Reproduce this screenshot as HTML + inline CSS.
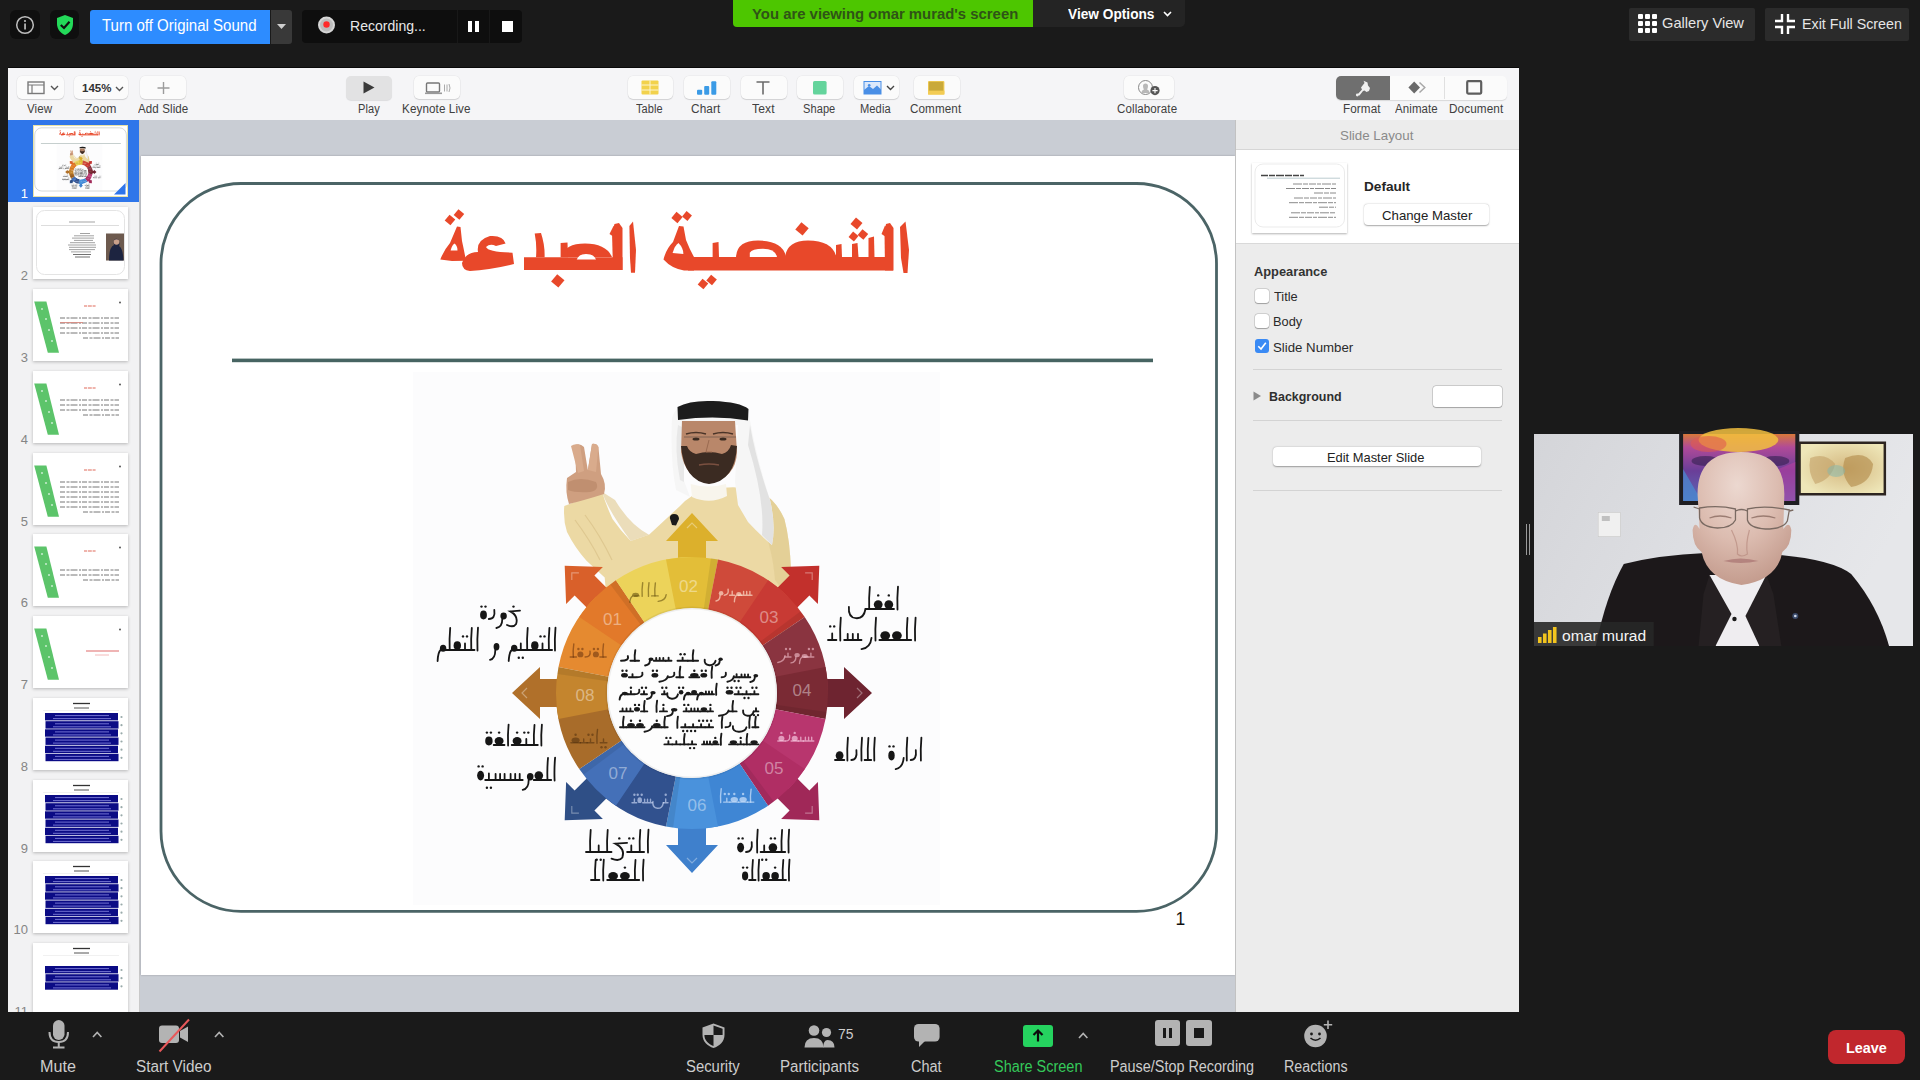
<!DOCTYPE html>
<html><head><meta charset="utf-8">
<style>
*{margin:0;padding:0;box-sizing:border-box}
html,body{width:1920px;height:1080px;overflow:hidden;background:#1a1a1a;font-family:"Liberation Sans",sans-serif}
.a{position:absolute}
.t{position:absolute;white-space:nowrap;line-height:1}
svg{position:absolute;overflow:visible}
/* keynote toolbar */
.kb{position:absolute;top:76px;height:23px;background:#fbfbfb;border-radius:5px;box-shadow:0 1px 1px rgba(0,0,0,.12),0 0 0 .5px rgba(0,0,0,.06)}
.kl{position:absolute;top:103px;font-size:12px;color:#404040;white-space:nowrap;line-height:1;letter-spacing:.1px}
.zl{position:absolute;top:1059px;font-size:16px;color:#cdcdcd;white-space:nowrap;line-height:1;transform-origin:0 0}
.num{position:absolute;font-size:13px;color:#808080;line-height:1;text-align:right;width:20px;left:8px}
.thumb{position:absolute;left:33px;width:95px;height:72px;background:#fff;box-shadow:0 1px 3px rgba(0,0,0,.25)}
</style></head><body>

<!-- ===== ZOOM TOP BAR ===== -->
<div class="a" style="left:10px;top:10px;width:30px;height:29px;background:#0f0f0f;border-radius:6px"></div>
<svg style="left:14px;top:14px" width="22" height="22" viewBox="0 0 22 22"><circle cx="11" cy="11" r="8.3" fill="none" stroke="#bdbdbd" stroke-width="1.5"/><rect x="10.2" y="9.5" width="1.7" height="6" fill="#bdbdbd"/><circle cx="11" cy="7" r="1.1" fill="#bdbdbd"/></svg>
<div class="a" style="left:50px;top:10px;width:29px;height:29px;background:#0f0f0f;border-radius:6px"></div>
<svg style="left:55px;top:14px" width="20" height="22" viewBox="0 0 20 22"><path d="M10 1 L18 4 L18 10 C18 15 14.5 19 10 21 C5.5 19 2 15 2 10 L2 4 Z" fill="#23d959"/><path d="M5.8 11 L9 14 L14.5 7.8" fill="none" stroke="#0f0f0f" stroke-width="2.2"/></svg>
<div class="a" style="left:90px;top:10px;width:180px;height:34px;background:#2d8cff;border-radius:3px 0 0 3px"></div>
<div class="t" id="t_orig" style="left:101.5px;top:18px;font-size:16px;color:#fff;transform:scaleX(0.939);transform-origin:0 0">Turn off Original Sound</div>
<div class="a" style="left:271px;top:10px;width:21px;height:34px;background:#393939;border-radius:0 3px 3px 0"></div>
<svg style="left:277px;top:24px" width="10" height="6"><path d="M0 0 L9 0 L4.5 5 Z" fill="#cfcfcf"/></svg>
<div class="a" style="left:302px;top:10px;width:220px;height:33px;background:#0e0e0e;border-radius:4px"></div>
<div class="a" style="left:457px;top:10px;width:1px;height:33px;background:#181818"></div>
<div class="a" style="left:489px;top:10px;width:1px;height:33px;background:#181818"></div>
<svg style="left:317px;top:16px" width="20" height="20"><circle cx="9.5" cy="9" r="8.5" fill="#d6d6d6"/><circle cx="9.5" cy="9" r="6.5" fill="#bcbcbc"/><circle cx="9.5" cy="8.5" r="3.2" fill="#ff2a2a"/></svg>
<div class="t" id="t_rec" style="left:349.8px;top:18px;font-size:15.5px;color:#e8e8e8;transform:scaleX(0.906);transform-origin:0 0">Recording...</div>
<svg style="left:468px;top:20px" width="14" height="14"><rect x="0" y="1" width="4" height="11" fill="#fff"/><rect x="7" y="1" width="4" height="11" fill="#fff"/></svg>
<svg style="left:501px;top:20px" width="14" height="14"><rect x="1" y="1" width="11" height="11" fill="#fff"/></svg>

<div class="a" style="left:733px;top:0;width:300px;height:27px;background:#4dc600;border-radius:0 0 0 4px"></div>
<div class="t" id="t_view" style="left:751.5px;top:6px;font-size:15px;font-weight:bold;color:#2f5417;transform:scaleX(0.992);transform-origin:0 0">You are viewing omar murad's screen</div>
<div class="a" style="left:1033px;top:0;width:152px;height:27px;background:#242424;border-radius:0 0 5px 0"></div>
<div class="t" id="t_vo" style="left:1067.5px;top:7px;font-size:14px;font-weight:bold;color:#fff;transform:scaleX(0.978);transform-origin:0 0">View Options</div>
<svg style="left:1163px;top:11px" width="10" height="7"><path d="M1 1 L4.5 4.5 L8 1" fill="none" stroke="#fff" stroke-width="1.6"/></svg>

<div class="a" style="left:1629px;top:8px;width:126px;height:33px;background:#2b2b2b;border-radius:2px"></div>
<svg style="left:1638px;top:14px" width="19" height="19"><g fill="#fff"><rect x="0" y="0" width="5" height="5" rx="1"/><rect x="7" y="0" width="5" height="5" rx="1"/><rect x="14" y="0" width="5" height="5" rx="1"/><rect x="0" y="7" width="5" height="5" rx="1"/><rect x="7" y="7" width="5" height="5" rx="1"/><rect x="14" y="7" width="5" height="5" rx="1"/><rect x="0" y="14" width="5" height="5" rx="1"/><rect x="7" y="14" width="5" height="5" rx="1"/><rect x="14" y="14" width="5" height="5" rx="1"/></g></svg>
<div class="t" id="t_gal" style="left:1661.5px;top:15px;font-size:15px;color:#e6e6e6;transform:scaleX(0.976);transform-origin:0 0">Gallery View</div>
<div class="a" style="left:1765px;top:8px;width:144px;height:33px;background:#2b2b2b;border-radius:2px"></div>
<svg style="left:1775px;top:14px" width="20" height="20"><g fill="none" stroke="#fff" stroke-width="2.4"><path d="M7 0 V7 H0"/><path d="M13 0 V7 H20"/><path d="M7 20 V13 H0"/><path d="M13 20 V13 H20"/></g></svg>
<div class="t" id="t_exit" style="left:1801.5px;top:16px;font-size:15px;color:#e6e6e6;transform:scaleX(0.951);transform-origin:0 0">Exit Full Screen</div>

<!-- ===== KEYNOTE WINDOW ===== -->
<div class="a" style="left:8px;top:67px;width:1511px;height:945px;background:#f5f5f7;border-top:1px solid #0a0a0a"></div>
<div class="kb" style="left:17px;width:47px"></div>
<svg style="left:27px;top:81px" width="32" height="14"><rect x="1" y="1" width="16" height="11.5" fill="none" stroke="#7a7a7a" stroke-width="1.4"/><path d="M1 4 H17 M5 4 V12.5" stroke="#7a7a7a" stroke-width="1.2"/><path d="M24 5 L27.5 8.5 L31 5" fill="none" stroke="#555" stroke-width="1.4"/></svg>
<div class="kb" style="left:74px;width:54px"></div>
<div class="t" id="t_zm" style="left:82px;top:83px;font-size:11.5px;color:#333;font-weight:bold">145%</div>
<svg style="left:115px;top:86px" width="10" height="6"><path d="M1 1 L4.5 4.5 L8 1" fill="none" stroke="#555" stroke-width="1.4"/></svg>
<div class="kb" style="left:140px;width:46px"></div>
<svg style="left:157px;top:82px" width="13" height="13"><path d="M6.5 0 V12 M0.5 6 H12.5" stroke="#9c9c9c" stroke-width="1.4"/></svg>
<div class="a" style="left:346px;top:76px;width:46px;height:24px;background:#e2e2e3;border-radius:5px;box-shadow:0 1px 1px rgba(0,0,0,.1)"></div>
<svg style="left:363px;top:81px" width="13" height="14"><path d="M0.5 0.5 L11.5 6.5 L0.5 12.5 Z" fill="#3a3a3a"/></svg>
<div class="kb" style="left:414px;width:46px"></div>
<svg style="left:425px;top:82px" width="27" height="13"><rect x="1.5" y="1" width="13" height="9" rx="1" fill="#fafafa" stroke="#777" stroke-width="1.4"/><rect x="0" y="10.5" width="17" height="1.6" fill="#999"/><path d="M19.5 2.5 V9.5 M22 2.5 V9.5" stroke="#aaa" stroke-width="1"/><path d="M24 2 Q26 6 24 10" fill="none" stroke="#aaa" stroke-width="1"/></svg>

<div class="kb" style="left:628px;width:45px"></div>
<svg style="left:641px;top:80px" width="18" height="15"><rect x="0.5" y="0.5" width="17" height="14" rx="1" fill="#f2d24c"/><path d="M0.5 5 H17.5 M0.5 10 H17.5 M9 0.5 V14.5" stroke="#fdf5cf" stroke-width="1"/></svg>
<div class="kb" style="left:684px;width:46px"></div>
<svg style="left:697px;top:81px" width="20" height="14"><rect x="0" y="8.8" width="5.2" height="5" rx="1" fill="#3b9be6"/><rect x="7.2" y="5" width="5" height="8.8" rx="1" fill="#3b9be6"/><rect x="14.3" y="0.2" width="5" height="13.6" rx="1" fill="#3b9be6"/></svg>
<div class="kb" style="left:741px;width:46px"></div>
<svg style="left:756px;top:81px" width="15" height="14"><path d="M0.5 1 H13.5 M7 1 V13.5" stroke="#6b6b6b" stroke-width="1.6"/></svg>
<div class="kb" style="left:797px;width:46px"></div>
<svg style="left:813px;top:81px" width="14" height="14"><rect x="0" y="0" width="13.6" height="13.6" rx="1.6" fill="#64d49c"/></svg>
<div class="kb" style="left:854px;width:45px"></div>
<svg style="left:864px;top:81px" width="32" height="14"><rect x="0" y="0.5" width="17" height="12.5" fill="#dbe8fb" stroke="#4a8fe6" stroke-width="1"/><path d="M0 13 L0 9 L5 5 L9 8 L13 4.5 L17 8.5 L17 13 Z" fill="#4a8fe6"/><circle cx="5.2" cy="4.3" r="1.3" fill="#4a8fe6"/><path d="M23 5 L26.5 8.5 L30 5" fill="none" stroke="#444" stroke-width="1.4"/></svg>
<div class="kb" style="left:914px;width:46px"></div>
<svg style="left:928px;top:81px" width="17" height="14"><rect x="0" y="0" width="16.4" height="13.6" rx="1" fill="#f3cc54"/><rect x="0.8" y="0.8" width="14.5" height="9" fill="#c9a93a"/><rect x="0" y="9.8" width="16.4" height="3.8" fill="#f3cc54"/></svg>

<div class="kb" style="left:1124px;width:50px"></div>
<svg style="left:1137px;top:80px" width="24" height="17"><circle cx="8.5" cy="7.5" r="7" fill="none" stroke="#888" stroke-width="1"/><path d="M4.5 13 Q4.5 10 7 9.5 Q6 8 6 6 Q6 3.5 8.5 3.5 Q11 3.5 11 6 Q11 8 10 9.5 Q12.5 10 12.5 13 Z" fill="#b8b8b8"/><circle cx="18" cy="10.6" r="4.6" fill="#555"/><path d="M18 8 V13.2 M15.4 10.6 H20.6" stroke="#fff" stroke-width="1.1"/></svg>
<div class="a" style="left:1336px;top:76px;width:171px;height:24px;background:#fbfbfb;border-radius:5px;box-shadow:0 1px 1px rgba(0,0,0,.12)"></div>
<div class="a" style="left:1336px;top:76px;width:54px;height:24px;background:#6f6f6f;border-radius:5px 0 0 5px"></div>
<div class="a" style="left:1444px;top:77px;width:1px;height:22px;background:#e0e0e0"></div>
<svg style="left:1354px;top:80px" width="18" height="17"><path d="M3 15 L8 9.5 L7 7.5 L10.5 3 L9.5 0.8 L13.5 2.5 L14 5.5 L16 8 L15 11 L12.5 12 L10.5 10.5 L9 11 L5.5 15.5 Z" fill="#f0f0f0"/><circle cx="3.3" cy="15" r="1.4" fill="#f0f0f0"/></svg>
<svg style="left:1408px;top:81px" width="19" height="14"><path d="M6.2 0.5 L12 6.5 L6.2 12.5 L0.4 6.5 Z" fill="#6a6a6a"/><path d="M11.5 1.5 L16.8 6.5 L11.5 11.5" fill="none" stroke="#a8a8a8" stroke-width="1.5"/></svg>
<svg style="left:1466px;top:80px" width="18" height="16"><rect x="1.2" y="1.2" width="14" height="12.4" rx="1" fill="none" stroke="#5e5e5e" stroke-width="2.2"/></svg>

<div class="kl" id="t_k_view" style="left:26.5px;transform:scaleX(0.963);transform-origin:0 0">View</div>
<div class="kl" id="t_k_zoom" style="left:84.5px;transform:scaleX(1.016);transform-origin:0 0">Zoom</div>
<div class="kl" id="t_k_add" style="left:137.5px;transform:scaleX(0.963);transform-origin:0 0">Add Slide</div>
<div class="kl" id="t_k_play" style="left:357.5px;transform:scaleX(0.917);transform-origin:0 0">Play</div>
<div class="kl" id="t_k_live" style="left:401.9px;transform:scaleX(0.972);transform-origin:0 0">Keynote Live</div>
<div class="kl" id="t_k_table" style="left:635.5px;transform:scaleX(0.916);transform-origin:0 0">Table</div>
<div class="kl" id="t_k_chart" style="left:691.0px;transform:scaleX(0.984);transform-origin:0 0">Chart</div>
<div class="kl" id="t_k_text" style="left:752.0px;transform:scaleX(1.009);transform-origin:0 0">Text</div>
<div class="kl" id="t_k_shape" style="left:802.5px;transform:scaleX(0.919);transform-origin:0 0">Shape</div>
<div class="kl" id="t_k_media" style="left:860.1px;transform:scaleX(0.926);transform-origin:0 0">Media</div>
<div class="kl" id="t_k_comment" style="left:909.5px;transform:scaleX(0.972);transform-origin:0 0">Comment</div>
<div class="kl" id="t_k_collab" style="left:1117.3px;transform:scaleX(0.963);transform-origin:0 0">Collaborate</div>
<div class="kl" id="t_k_format" style="left:1343.0px;transform:scaleX(0.974);transform-origin:0 0">Format</div>
<div class="kl" id="t_k_anim" style="left:1394.5px;transform:scaleX(0.957);transform-origin:0 0">Animate</div>
<div class="kl" id="t_k_doc" style="left:1448.5px;transform:scaleX(0.979);transform-origin:0 0">Document</div>

<!-- sidebar -->
<div class="a" style="left:8px;top:120px;width:132px;height:892px;background:#f2f2f3"></div>
<div class="a" id="sidebar" style="left:0;top:0;width:140px;height:1012px;overflow:hidden">
<div class="a" style="left:8px;top:120px;width:132px;height:82px;background:#2f76ea"></div>
<div class="num" style="top:187px;color:#fff;width:20px">1</div>
<div class="thumb" style="top:125px;border:1.5px solid #e9e3a6;box-shadow:none;overflow:hidden"><svg style="left:-1.5px;top:-1.5px" width="95" height="72" viewBox="141 156 1094 819"><use href="#slideart"/></svg><svg style="left:80px;top:57px" width="12" height="12"><path d="M11.5 0 L11.5 11.5 L0 11.5 Z" fill="#2f76ea"/></svg></div>
<div class="num" style="top:269px;color:#858585;width:20px">2</div>
<div class="thumb" style="top:207px"><svg style="left:0;top:0" width="95" height="72">
<rect x="3.5" y="3.5" width="88" height="64" rx="8" fill="none" stroke="#e4e4e4" stroke-width="1"/>
<path d="M36 15 H62" stroke="#999" stroke-width="0.9"/><path d="M8 18.5 H86" stroke="#cfcfcf" stroke-width="0.7"/>
<g stroke="#555" stroke-width="0.55"><path d="M47 26.5 H57 M41 28.8 H61 M39 31.1 H61 M41 33.4 H60 M37 35.7 H62 M35 38 H63 M36 40.3 H63 M36 42.6 H62 M38 44.9 H58"/></g>
<path d="M40 47.5 H58 M42 50 H57" stroke="#333" stroke-width="0.7"/>
<rect x="73" y="26.5" width="18" height="27" fill="#6d5a4e"/><path d="M76 53.5 Q76 40 81 38 Q80 34 82 32 Q85 31 86 34 Q87 38 86 39 Q90 41 90.5 53.5 Z" fill="#1d2440"/><circle cx="83.5" cy="35" r="2.8" fill="#c9a08a"/>
</svg></div>
<div class="num" style="top:351px;color:#858585;width:20px">3</div>
<div class="thumb" style="top:289px"><svg style="left:0;top:0" width="95" height="72"><path d="M1.2 12.5 L13.4 12.5 L26 63.7 L14.8 63.7 Z" fill="#5cc46a"/><g fill="#c9ecd0"><circle cx="9" cy="20" r="1"/><circle cx="13" cy="30" r="1"/><circle cx="16" cy="41" r="1"/><circle cx="19" cy="52" r="1"/></g><circle cx="87" cy="13.5" r="0.9" fill="#444"/><path d="M51 17 H63" stroke="#e06a5a" stroke-width="1.1" stroke-dasharray="3 0.8 4 0.8 3"/><path d="M27 29.0 H86" stroke="#666" stroke-width="0.9" stroke-dasharray="5 1.5 3 1 7 1.5 2 1"/><path d="M27 34.0 H86" stroke="#666" stroke-width="0.9" stroke-dasharray="5 1.5 3 1 7 1.5 2 1"/><path d="M27 39.0 H86" stroke="#666" stroke-width="0.9" stroke-dasharray="5 1.5 3 1 7 1.5 2 1"/><path d="M27 44.0 H86" stroke="#666" stroke-width="0.9" stroke-dasharray="5 1.5 3 1 7 1.5 2 1"/><path d="M50 49.0 H86" stroke="#666" stroke-width="0.9" stroke-dasharray="5 1.5 3 1 7 1.5 2 1"/><path d="M27 33.6 H50" stroke="#d98a80" stroke-width="1"/></svg></div>
<div class="num" style="top:433px;color:#858585;width:20px">4</div>
<div class="thumb" style="top:371px"><svg style="left:0;top:0" width="95" height="72"><path d="M1.2 12.5 L13.4 12.5 L26 63.7 L14.8 63.7 Z" fill="#5cc46a"/><g fill="#c9ecd0"><circle cx="9" cy="20" r="1"/><circle cx="13" cy="30" r="1"/><circle cx="16" cy="41" r="1"/><circle cx="19" cy="52" r="1"/></g><circle cx="87" cy="13.5" r="0.9" fill="#444"/><path d="M51 17 H63" stroke="#e06a5a" stroke-width="1.1" stroke-dasharray="3 0.8 4 0.8 3"/><path d="M27 29.0 H86" stroke="#666" stroke-width="0.9" stroke-dasharray="5 1.5 3 1 7 1.5 2 1"/><path d="M27 34.0 H86" stroke="#666" stroke-width="0.9" stroke-dasharray="5 1.5 3 1 7 1.5 2 1"/><path d="M27 39.0 H86" stroke="#666" stroke-width="0.9" stroke-dasharray="5 1.5 3 1 7 1.5 2 1"/><path d="M50 44.0 H86" stroke="#666" stroke-width="0.9" stroke-dasharray="5 1.5 3 1 7 1.5 2 1"/></svg></div>
<div class="num" style="top:515px;color:#858585;width:20px">5</div>
<div class="thumb" style="top:453px"><svg style="left:0;top:0" width="95" height="72"><path d="M1.2 12.5 L13.4 12.5 L26 63.7 L14.8 63.7 Z" fill="#5cc46a"/><g fill="#c9ecd0"><circle cx="9" cy="20" r="1"/><circle cx="13" cy="30" r="1"/><circle cx="16" cy="41" r="1"/><circle cx="19" cy="52" r="1"/></g><circle cx="87" cy="13.5" r="0.9" fill="#444"/><path d="M51 17 H63" stroke="#e06a5a" stroke-width="1.1" stroke-dasharray="3 0.8 4 0.8 3"/><path d="M27 29.0 H86" stroke="#666" stroke-width="0.9" stroke-dasharray="5 1.5 3 1 7 1.5 2 1"/><path d="M27 34.0 H86" stroke="#666" stroke-width="0.9" stroke-dasharray="5 1.5 3 1 7 1.5 2 1"/><path d="M27 39.0 H86" stroke="#666" stroke-width="0.9" stroke-dasharray="5 1.5 3 1 7 1.5 2 1"/><path d="M27 44.0 H86" stroke="#666" stroke-width="0.9" stroke-dasharray="5 1.5 3 1 7 1.5 2 1"/><path d="M27 49.0 H86" stroke="#666" stroke-width="0.9" stroke-dasharray="5 1.5 3 1 7 1.5 2 1"/><path d="M27 54.0 H86" stroke="#666" stroke-width="0.9" stroke-dasharray="5 1.5 3 1 7 1.5 2 1"/><path d="M50 59.0 H86" stroke="#666" stroke-width="0.9" stroke-dasharray="5 1.5 3 1 7 1.5 2 1"/></svg></div>
<div class="num" style="top:596px;color:#858585;width:20px">6</div>
<div class="thumb" style="top:534px"><svg style="left:0;top:0" width="95" height="72"><path d="M1.2 12.5 L13.4 12.5 L26 63.7 L14.8 63.7 Z" fill="#5cc46a"/><g fill="#c9ecd0"><circle cx="9" cy="20" r="1"/><circle cx="13" cy="30" r="1"/><circle cx="16" cy="41" r="1"/><circle cx="19" cy="52" r="1"/></g><circle cx="87" cy="13.5" r="0.9" fill="#444"/><path d="M51 17 H63" stroke="#e06a5a" stroke-width="1.1" stroke-dasharray="3 0.8 4 0.8 3"/><path d="M27 36.0 H86" stroke="#666" stroke-width="0.9" stroke-dasharray="5 1.5 3 1 7 1.5 2 1"/><path d="M27 41.0 H86" stroke="#666" stroke-width="0.9" stroke-dasharray="5 1.5 3 1 7 1.5 2 1"/><path d="M50 46.0 H86" stroke="#666" stroke-width="0.9" stroke-dasharray="5 1.5 3 1 7 1.5 2 1"/></svg></div>
<div class="num" style="top:678px;color:#858585;width:20px">7</div>
<div class="thumb" style="top:616px"><svg style="left:0;top:0" width="95" height="72"><path d="M1.2 12.5 L13.4 12.5 L26 63.7 L14.8 63.7 Z" fill="#5cc46a"/><g fill="#c9ecd0"><circle cx="9" cy="20" r="1"/><circle cx="13" cy="30" r="1"/><circle cx="16" cy="41" r="1"/><circle cx="19" cy="52" r="1"/></g><circle cx="87" cy="13.5" r="0.9" fill="#444"/><path d="M53 35 H86" stroke="#e06b6b" stroke-width="1.2"/><path d="M62 39 H76" stroke="#f0a8a8" stroke-width="0.8"/></svg></div>
<div class="num" style="top:760px;color:#858585;width:20px">8</div>
<div class="thumb" style="top:698px"><svg style="left:0;top:0" width="95" height="72"><path d="M40 5.5 H57" stroke="#333" stroke-width="1.3"/><path d="M41 10 H56" stroke="#555" stroke-width="1"/><path d="M10 12.5 H86" stroke="#e8e8e8" stroke-width="0.6"/><rect x="12" y="15.0" width="73" height="7.4" fill="#0b0b85"/><path d="M22 17.6 H76 M20 20.6 H78" stroke="#8e8ee6" stroke-width="0.8"/><circle cx="88.5" cy="19.0" r="1.1" fill="#9aa"/><rect x="12.5" y="23.2" width="73" height="7.4" fill="#0b0b85"/><path d="M22 25.8 H76 M20 28.8 H78" stroke="#8e8ee6" stroke-width="0.8"/><circle cx="88.5" cy="27.2" r="1.1" fill="#9aa"/><rect x="12" y="31.3" width="73" height="7.4" fill="#0b0b85"/><path d="M22 33.9 H76 M20 36.9 H78" stroke="#8e8ee6" stroke-width="0.8"/><circle cx="88.5" cy="35.3" r="1.1" fill="#9aa"/><rect x="12.5" y="39.5" width="73" height="7.4" fill="#0b0b85"/><path d="M22 42.1 H76 M20 45.1 H78" stroke="#8e8ee6" stroke-width="0.8"/><circle cx="88.5" cy="43.5" r="1.1" fill="#9aa"/><rect x="12" y="47.7" width="73" height="7.4" fill="#0b0b85"/><path d="M22 50.3 H76 M20 53.3 H78" stroke="#8e8ee6" stroke-width="0.8"/><circle cx="88.5" cy="51.7" r="1.1" fill="#9aa"/><rect x="12.5" y="55.8" width="73" height="7.4" fill="#0b0b85"/><path d="M22 58.4 H76 M20 61.4 H78" stroke="#8e8ee6" stroke-width="0.8"/><circle cx="88.5" cy="59.8" r="1.1" fill="#9aa"/></svg></div>
<div class="num" style="top:842px;color:#858585;width:20px">9</div>
<div class="thumb" style="top:780px"><svg style="left:0;top:0" width="95" height="72"><path d="M40 5.5 H57" stroke="#333" stroke-width="1.3"/><path d="M41 10 H56" stroke="#555" stroke-width="1"/><path d="M10 12.5 H86" stroke="#e8e8e8" stroke-width="0.6"/><rect x="12" y="15.0" width="73" height="7.4" fill="#0b0b85"/><path d="M22 17.6 H76 M20 20.6 H78" stroke="#8e8ee6" stroke-width="0.8"/><circle cx="88.5" cy="19.0" r="1.1" fill="#9aa"/><rect x="12.5" y="23.2" width="73" height="7.4" fill="#0b0b85"/><path d="M22 25.8 H76 M20 28.8 H78" stroke="#8e8ee6" stroke-width="0.8"/><circle cx="88.5" cy="27.2" r="1.1" fill="#9aa"/><rect x="12" y="31.3" width="73" height="7.4" fill="#0b0b85"/><path d="M22 33.9 H76 M20 36.9 H78" stroke="#8e8ee6" stroke-width="0.8"/><circle cx="88.5" cy="35.3" r="1.1" fill="#9aa"/><rect x="12.5" y="39.5" width="73" height="7.4" fill="#0b0b85"/><path d="M22 42.1 H76 M20 45.1 H78" stroke="#8e8ee6" stroke-width="0.8"/><circle cx="88.5" cy="43.5" r="1.1" fill="#9aa"/><rect x="12" y="47.7" width="73" height="7.4" fill="#0b0b85"/><path d="M22 50.3 H76 M20 53.3 H78" stroke="#8e8ee6" stroke-width="0.8"/><circle cx="88.5" cy="51.7" r="1.1" fill="#9aa"/><rect x="12.5" y="55.8" width="73" height="7.4" fill="#0b0b85"/><path d="M22 58.4 H76 M20 61.4 H78" stroke="#8e8ee6" stroke-width="0.8"/><circle cx="88.5" cy="59.8" r="1.1" fill="#9aa"/></svg></div>
<div class="num" style="top:923px;color:#858585;width:20px">10</div>
<div class="thumb" style="top:861px"><svg style="left:0;top:0" width="95" height="72"><path d="M40 5.5 H57" stroke="#333" stroke-width="1.3"/><path d="M41 10 H56" stroke="#555" stroke-width="1"/><path d="M10 12.5 H86" stroke="#e8e8e8" stroke-width="0.6"/><rect x="12" y="15.0" width="73" height="7.4" fill="#0b0b85"/><path d="M22 17.6 H76 M20 20.6 H78" stroke="#8e8ee6" stroke-width="0.8"/><circle cx="88.5" cy="19.0" r="1.1" fill="#9aa"/><rect x="12.5" y="23.2" width="73" height="7.4" fill="#0b0b85"/><path d="M22 25.8 H76 M20 28.8 H78" stroke="#8e8ee6" stroke-width="0.8"/><circle cx="88.5" cy="27.2" r="1.1" fill="#9aa"/><rect x="12" y="31.3" width="73" height="7.4" fill="#0b0b85"/><path d="M22 33.9 H76 M20 36.9 H78" stroke="#8e8ee6" stroke-width="0.8"/><circle cx="88.5" cy="35.3" r="1.1" fill="#9aa"/><rect x="12.5" y="39.5" width="73" height="7.4" fill="#0b0b85"/><path d="M22 42.1 H76 M20 45.1 H78" stroke="#8e8ee6" stroke-width="0.8"/><circle cx="88.5" cy="43.5" r="1.1" fill="#9aa"/><rect x="12" y="47.7" width="73" height="7.4" fill="#0b0b85"/><path d="M22 50.3 H76 M20 53.3 H78" stroke="#8e8ee6" stroke-width="0.8"/><circle cx="88.5" cy="51.7" r="1.1" fill="#9aa"/><rect x="12.5" y="55.8" width="73" height="7.4" fill="#0b0b85"/><path d="M22 58.4 H76 M20 61.4 H78" stroke="#8e8ee6" stroke-width="0.8"/><circle cx="88.5" cy="59.8" r="1.1" fill="#9aa"/></svg></div>
<div class="num" style="top:1005px;color:#858585;width:20px">11</div>
<div class="thumb" style="top:943px"><svg style="left:0;top:0" width="95" height="72"><path d="M40 5.5 H57" stroke="#333" stroke-width="1.3"/><path d="M41 10 H56" stroke="#555" stroke-width="1"/><path d="M10 12.5 H86" stroke="#e8e8e8" stroke-width="0.6"/><rect x="12" y="23.0" width="73" height="7.4" fill="#0b0b85"/><path d="M22 25.6 H76 M20 28.6 H78" stroke="#8e8ee6" stroke-width="0.8"/><circle cx="88.5" cy="27.0" r="1.1" fill="#9aa"/><rect x="12.5" y="31.2" width="73" height="7.4" fill="#0b0b85"/><path d="M22 33.8 H76 M20 36.8 H78" stroke="#8e8ee6" stroke-width="0.8"/><circle cx="88.5" cy="35.2" r="1.1" fill="#9aa"/><rect x="12" y="39.3" width="73" height="7.4" fill="#0b0b85"/><path d="M22 41.9 H76 M20 44.9 H78" stroke="#8e8ee6" stroke-width="0.8"/><circle cx="88.5" cy="43.3" r="1.1" fill="#9aa"/></svg></div>
</div>
<div class="a" style="left:139px;top:120px;width:1px;height:892px;background:#c9c9c9"></div>
<!-- canvas -->
<div class="a" style="left:140px;top:120px;width:1095px;height:892px;background:#c9cdd4"></div>
<div class="a" style="left:141px;top:156px;width:1094px;height:819px;background:#fff;box-shadow:0 0 2px rgba(0,0,0,.25)" id="slide"></div>
<!--SLIDEART--><svg style="left:141px;top:156px" width="1094" height="819" viewBox="141 156 1094 819"><g id="slideart"><rect x="413" y="372" width="527" height="533" fill="#fcfcfd"/>
<rect x="161" y="183.5" width="1055.5" height="727.8" rx="80" ry="80" fill="none" stroke="#4b6466" stroke-width="2.8"/>
<rect x="232" y="358.6" width="921" height="3.6" fill="#476462"/>
<text x="1175.5" y="924.5" font-family="Liberation Sans" font-size="17.5" fill="#111">1</text>
<path d="M900 227 L905.5 221.5 L909 250 L907.5 273 L903.5 273 L901 258 Z" fill="#e8482a"/>
<path d="M884.5 232 L886 224 L890 223 L893.5 228 L893.5 270.4 L885 270.4 Z" fill="#e8482a"/>
<path d="M881.5 234 L885 225.5 L889.5 230 L886 237 Z" fill="#e8482a"/>
<path d="M688 256.9 L893 256.9 L893 270.4 L688 270.4 Z" fill="#e8482a"/>
<path d="M852 244 L857.5 243 L858.5 257 L852 257 Z" fill="#e8482a"/>
<path d="M868.5 238 L874 236.5 L874.5 257 L868.5 257 Z" fill="#e8482a"/>
<path d="M836 245 L841.5 244 L842 257 L836 257 Z" fill="#e8482a"/>
<path d="M785 257 Q787 241 808 240.6 Q832 240.6 836.5 257 Z" fill="#e8482a"/>
<path d="M736 257 Q737 240.6 758 240.6 Q783 240.6 786 257 Z" fill="#e8482a"/>
<path d="M712.6 243 L718.5 242 L719 257 L712.6 257 Z" fill="#e8482a"/>
<path d="M663.5 259.6 Q666 249 673 242 L679 226 L683.5 226.5 L686 240 Q690 250 694 257 L694 270.4 L684 270.4 Q672 269 663.5 259.6 Z" fill="#e8482a"/>
<path d="M629.4 226 L633 221.5 L636 250 L635 272.8 L631 272.8 L630 258 Z" fill="#e8482a"/>
<path d="M612 232 L614.5 224 L619 223 L622.5 228 L622.5 270 L613 270 Z" fill="#e8482a"/>
<path d="M609.5 234 L613.5 226 L618 230 L614 237 Z" fill="#e8482a"/>
<path d="M524 257.3 L622.5 257.3 L622.5 270 L524 270 Z" fill="#e8482a"/>
<path d="M562 257 Q564 243.5 585 243.5 Q606 243.5 612 257 Z" fill="#e8482a"/>
<path d="M560.6 243 L567.5 242.4 L568 257.3 L560.6 257.3 Z" fill="#e8482a"/>
<path d="M534.7 233.5 L541 233 Q545 245 544.6 257.3 L536 257.3 Q537 245 534.7 233.5 Z" fill="#e8482a"/>
<path d="M462 263 Q466 252 478 252 Q476 240 490 236 Q503 235 505.6 243.5 L496 246 Q490 243 486 247 Q488 252 512.5 252.7 L514 264 Q490 270 470 271 Q462 270 462 263 Z" fill="#e8482a"/>
<path d="M440.3 259.5 Q444 250 450 243 L457 226.4 L460.5 227 L462 241 Q464 250 466 260.7 L452 261 Z" fill="#e8482a"/>
<path d="M749.8 252.8 Q752 248.7 763 248.7 Q775 248.7 777 256.9 L749.8 256.9 Z" fill="#fff"/>
<path d="M672.6 253 Q675 245 678.5 243 Q683.4 248 683.4 254 Z" fill="#fff"/>
<path d="M576.7 259.6 Q579 253.9 586 253.9 Q594 253.9 596 259.6 Z" fill="#fff"/>
<path d="M450.6 250.4 Q452 245 454.5 243.5 Q457.5 246 457.5 250.4 Z" fill="#fff"/>
<rect x="673.0" y="213.5" width="8" height="8" fill="#e8482a" transform="rotate(40 677 217.5)"/>
<rect x="683.5" y="212.5" width="7" height="7" fill="#e8482a" transform="rotate(40 687 216)"/>
<rect x="797.2" y="224.2" width="9.5" height="9.5" fill="#e8482a" transform="rotate(40 802 229)"/>
<rect x="852.2" y="219.2" width="8.5" height="8.5" fill="#e8482a" transform="rotate(40 856.5 223.5)"/>
<rect x="859.2" y="230.8" width="7.5" height="7.5" fill="#e8482a" transform="rotate(40 863 234.5)"/>
<rect x="850.0" y="233.0" width="7" height="7" fill="#e8482a" transform="rotate(40 853.5 236.5)"/>
<rect x="699.2" y="280.2" width="7.5" height="7.5" fill="#e8482a" transform="rotate(40 703 284)"/>
<rect x="707.8" y="276.2" width="7.5" height="7.5" fill="#e8482a" transform="rotate(40 711.5 280)"/>
<rect x="553.0" y="276.2" width="9.5" height="9.5" fill="#e8482a" transform="rotate(40 557.8 281)"/>
<rect x="446.2" y="216.2" width="7.5" height="7.5" fill="#e8482a" transform="rotate(40 450 220)"/>
<rect x="455.2" y="210.8" width="7.5" height="7.5" fill="#e8482a" transform="rotate(40 459 214.5)"/>
<path d="M564.3 506 Q563 520 567 532 Q575 548 586.5 560.7 L604.7 577.6 L610 640 L792 640 L791 571 Q790 540 784.4 519 Q775 498 758 490.4 Q740 486 723 487.8 Q700 490 690.6 497 Q684 501 680 506 L649 534.7 L630.7 541 Q620 530 612.5 519 Q606 505 602 491.7 Z" fill="#ecd9a4"/>
<path d="M602 491.7 Q608 510 630.7 541 L649 534.7 Q630 525 615 500 Z" fill="#dfc88e" opacity="0.6"/>
<path d="M740 500 Q770 520 775 580 L790 600 L791 571 Q790 540 784.4 519 Q775 498 758 490.4 Z" fill="#e0c98f" opacity="0.6"/>
<path d="M575 520 Q590 540 600 560 M585 515 Q600 535 612 560" stroke="#d8c088" stroke-width="1.2" fill="none" opacity="0.7"/>
<path d="M567 478 Q565 492 569 504 Q585 500 604 494 Q607 484 601 474 L598.4 447 Q596 443 592 444 L587.8 470 L584 447 Q580 443 575 445 L576 472 Z" fill="#cf9f80"/>
<path d="M571 446 Q575 443 580 445 L584 471 L578 473 Z M588 470 L592 444 Q597 443 598.4 447 L596 472 Z" fill="#d9ab8c"/>
<path d="M568 482 Q580 476 596 482 Q600 490 590 492 Q575 493 568 490 Z" fill="#c08f70"/>
<path d="M672 418 Q676 399 712 400.5 Q748 402 750 420 Q756 455 770 500 Q776 525 772 545 Q760 535 748 522 L738 505 L735 482 L738 425 L684 425 L680 470 L690 497 L676 490 Q670 460 672 418 Z" fill="#f6f6f6"/>
<path d="M750 425 Q756 460 770 500 Q776 525 772 545 L762 535 Q765 500 748 445 Z" fill="#e2e2e2"/>
<path d="M678 425 Q674 450 680 480 L684 482 L684 428 Z" fill="#e8e8e8"/>
<path d="M677.5 407 Q690 400 713 401 Q740 402 748.5 409 L748 420.5 Q715 415 678 420 Z" fill="#1c1c1c"/>
<path d="M682 421 L735 421 L737 452 Q736 478 710 482 Q685 479 681 452 Z" fill="#b9876a"/>
<path d="M681 446 Q684 481 709 484 Q735 481 737 446 L731 445 Q729 452 722 454 Q709 450 696 454 Q689 452 687 446 Z" fill="#3b2b22"/><path d="M699 465 Q709 463 719 465" stroke="#7a5040" stroke-width="1.3" fill="none"/>
<path d="M686 434 Q696 431 706 434 M713 434 Q723 431 733 434" stroke="#4a3428" stroke-width="1.6" fill="none"/><ellipse cx="696" cy="439" rx="3.5" ry="1.6" fill="#3a2a20"/><ellipse cx="723" cy="439" rx="3.5" ry="1.6" fill="#3a2a20"/><path d="M684 437 H736" stroke="#6a5548" stroke-width="0.7"/><path d="M709 440 L706 452 L712 452" stroke="#9a6a50" stroke-width="1" fill="none"/>
<path d="M690.7 484 Q708 489 726 484 L727 496 Q710 505 692 497 Z" fill="#f8f5ec"/>
<path d="M669.8 518 Q670 513.9 674 513.9 Q679 514 679 519 L676 525.6 L672 525 Z" fill="#1a1a1a"/>
<path d="M597.2 618.0 L574.6 595.4 L566.1 603.9 L564.7 565.7 L602.9 567.1 L594.4 575.6 L617.0 598.2 Z" fill="#d9602a"/>
<path d="M571.8 579.9 L571.8 572.8 L578.9 572.8" fill="none" stroke="rgba(255,255,255,.35)" stroke-width="1.2"/>
<path d="M678.0 573.0 L678.0 541.0 L666.0 541.0 L692.0 513.0 L718.0 541.0 L706.0 541.0 L706.0 573.0 Z" fill="#dcb02c"/>
<path d="M687.0 528.0 L692.0 523.0 L697.0 528.0" fill="none" stroke="rgba(255,255,255,.35)" stroke-width="1.2"/>
<path d="M767.0 598.2 L789.6 575.6 L781.1 567.1 L819.3 565.7 L817.9 603.9 L809.4 595.4 L786.8 618.0 Z" fill="#c2302c"/>
<path d="M805.1 572.8 L812.2 572.8 L812.2 579.9" fill="none" stroke="rgba(255,255,255,.35)" stroke-width="1.2"/>
<path d="M812.0 679.0 L844.0 679.0 L844.0 667.0 L872.0 693.0 L844.0 719.0 L844.0 707.0 L812.0 707.0 Z" fill="#6e2430"/>
<path d="M857.0 688.0 L862.0 693.0 L857.0 698.0" fill="none" stroke="rgba(255,255,255,.35)" stroke-width="1.2"/>
<path d="M786.8 768.0 L809.4 790.6 L817.9 782.1 L819.3 820.3 L781.1 818.9 L789.6 810.4 L767.0 787.8 Z" fill="#a02858"/>
<path d="M812.2 806.1 L812.2 813.2 L805.1 813.2" fill="none" stroke="rgba(255,255,255,.35)" stroke-width="1.2"/>
<path d="M706.0 813.0 L706.0 845.0 L718.0 845.0 L692.0 873.0 L666.0 845.0 L678.0 845.0 L678.0 813.0 Z" fill="#3f80cc"/>
<path d="M697.0 858.0 L692.0 863.0 L687.0 858.0" fill="none" stroke="rgba(255,255,255,.35)" stroke-width="1.2"/>
<path d="M617.0 787.8 L594.4 810.4 L602.9 818.9 L564.7 820.3 L566.1 782.1 L574.6 790.6 L597.2 768.0 Z" fill="#2f4f86"/>
<path d="M578.9 813.2 L571.8 813.2 L571.8 806.1" fill="none" stroke="rgba(255,255,255,.35)" stroke-width="1.2"/>
<path d="M572.0 707.0 L540.0 707.0 L540.0 719.0 L512.0 693.0 L540.0 667.0 L540.0 679.0 L572.0 679.0 Z" fill="#b0702a"/>
<path d="M527.0 698.0 L522.0 693.0 L527.0 688.0" fill="none" stroke="rgba(255,255,255,.35)" stroke-width="1.2"/>
<path d="M558.5 667.0 A136 136 0 0 1 595.8 596.8 L631.9 632.9 A85 85 0 0 0 608.6 676.8 Z" fill="#e58a30"/>
<path d="M579.3 616.9 A136 136 0 0 1 615.9 580.3 L644.5 622.5 A85 85 0 0 0 621.5 645.5 Z" fill="#e2792a"/>
<path d="M610.2 584.4 A136 136 0 0 1 615.9 580.3 L644.5 622.5 A85 85 0 0 0 640.8 625.1 Z" fill="rgba(0,0,0,.08)"/>
<path d="M615.9 580.3 A136 136 0 0 1 692.0 557.0 L692.0 608.0 A85 85 0 0 0 644.5 622.5 Z" fill="#ecd35a"/>
<path d="M666.0 559.5 A136 136 0 0 1 718.0 559.5 L708.2 609.6 A85 85 0 0 0 675.8 609.6 Z" fill="#e3be38"/>
<path d="M710.9 558.3 A136 136 0 0 1 718.0 559.5 L708.2 609.6 A85 85 0 0 0 703.8 608.8 Z" fill="rgba(0,0,0,.08)"/>
<path d="M718.0 559.5 A136 136 0 0 1 788.2 596.8 L752.1 632.9 A85 85 0 0 0 708.2 609.6 Z" fill="#cf4a3a"/>
<path d="M768.1 580.3 A136 136 0 0 1 804.7 616.9 L762.5 645.5 A85 85 0 0 0 739.5 622.5 Z" fill="#c83a34"/>
<path d="M800.6 611.2 A136 136 0 0 1 804.7 616.9 L762.5 645.5 A85 85 0 0 0 759.9 641.8 Z" fill="rgba(0,0,0,.08)"/>
<path d="M804.7 616.9 A136 136 0 0 1 828.0 693.0 L777.0 693.0 A85 85 0 0 0 762.5 645.5 Z" fill="#8a3440"/>
<path d="M825.5 667.0 A136 136 0 0 1 825.5 719.0 L775.4 709.2 A85 85 0 0 0 775.4 676.8 Z" fill="#7a2a34"/>
<path d="M826.7 711.9 A136 136 0 0 1 825.5 719.0 L775.4 709.2 A85 85 0 0 0 776.2 704.8 Z" fill="rgba(0,0,0,.08)"/>
<path d="M825.5 719.0 A136 136 0 0 1 788.2 789.2 L752.1 753.1 A85 85 0 0 0 775.4 709.2 Z" fill="#b8366e"/>
<path d="M804.7 769.1 A136 136 0 0 1 768.1 805.7 L739.5 763.5 A85 85 0 0 0 762.5 740.5 Z" fill="#b02e64"/>
<path d="M773.8 801.6 A136 136 0 0 1 768.1 805.7 L739.5 763.5 A85 85 0 0 0 743.2 760.9 Z" fill="rgba(0,0,0,.08)"/>
<path d="M768.1 805.7 A136 136 0 0 1 692.0 829.0 L692.0 778.0 A85 85 0 0 0 739.5 763.5 Z" fill="#3f86d4"/>
<path d="M718.0 826.5 A136 136 0 0 1 666.0 826.5 L675.8 776.4 A85 85 0 0 0 708.2 776.4 Z" fill="#4a92dc"/>
<path d="M673.1 827.7 A136 136 0 0 1 666.0 826.5 L675.8 776.4 A85 85 0 0 0 680.2 777.2 Z" fill="rgba(0,0,0,.08)"/>
<path d="M666.0 826.5 A136 136 0 0 1 595.8 789.2 L631.9 753.1 A85 85 0 0 0 675.8 776.4 Z" fill="#31518e"/>
<path d="M615.9 805.7 A136 136 0 0 1 579.3 769.1 L621.5 740.5 A85 85 0 0 0 644.5 763.5 Z" fill="#4470b8"/>
<path d="M583.4 774.8 A136 136 0 0 1 579.3 769.1 L621.5 740.5 A85 85 0 0 0 624.1 744.2 Z" fill="rgba(0,0,0,.08)"/>
<path d="M579.3 769.1 A136 136 0 0 1 556.0 693.0 L607.0 693.0 A85 85 0 0 0 621.5 740.5 Z" fill="#a86c2a"/>
<path d="M558.5 719.0 A136 136 0 0 1 558.5 667.0 L608.6 676.8 A85 85 0 0 0 608.6 709.2 Z" fill="#c4852e"/>
<path d="M557.3 674.1 A136 136 0 0 1 558.5 667.0 L608.6 676.8 A85 85 0 0 0 607.8 681.2 Z" fill="rgba(0,0,0,.08)"/>
<circle cx="692.0" cy="693.0" r="85" fill="#fdfdfd"/>
<circle cx="692.0" cy="693.0" r="85" fill="none" stroke="rgba(0,0,0,.06)" stroke-width="3"/>
<text x="612.5" y="625" text-anchor="middle" font-family="Liberation Sans" font-size="17" fill="rgba(255,255,255,.42)">01</text>
<text x="688.5" y="592" text-anchor="middle" font-family="Liberation Sans" font-size="17" fill="rgba(255,255,255,.42)">02</text>
<text x="769" y="622.5" text-anchor="middle" font-family="Liberation Sans" font-size="17" fill="rgba(255,255,255,.42)">03</text>
<text x="802" y="696" text-anchor="middle" font-family="Liberation Sans" font-size="17" fill="rgba(255,255,255,.42)">04</text>
<text x="774" y="774" text-anchor="middle" font-family="Liberation Sans" font-size="17" fill="rgba(255,255,255,.42)">05</text>
<text x="697" y="811" text-anchor="middle" font-family="Liberation Sans" font-size="17" fill="rgba(255,255,255,.42)">06</text>
<text x="618" y="779" text-anchor="middle" font-family="Liberation Sans" font-size="17" fill="rgba(255,255,255,.42)">07</text>
<text x="585" y="700.5" text-anchor="middle" font-family="Liberation Sans" font-size="17" fill="rgba(255,255,255,.42)">08</text>
<ellipse cx="720.6" cy="659.2" rx="2.2" ry="1.8" fill="#1a1a1a"/><path d="M719.7 660.8 Q719.7 665.0 715.6 665.5" stroke="#1a1a1a" stroke-width="1.9" fill="none" stroke-linecap="round"/><path d="M715.6 660.8 Q714.4 665.5 709.3 665.2 Q704.1 664.8 704.7 659.8" stroke="#1a1a1a" stroke-width="1.9" fill="none" stroke-linecap="round"/>
<path d="M693.4 650.3 Q692.4 655.5 692.9 660.8 L687.8 660.8" stroke="#1a1a1a" stroke-width="1.9" fill="none" stroke-linecap="round"/><path d="M698.1 660.8 L692.9 660.8" stroke="#1a1a1a" stroke-width="1.9" fill="none" stroke-linecap="round"/><path d="M687.8 660.8 L677.5 660.8 M682.6 660.8 L682.6 657.6" stroke="#1a1a1a" stroke-width="1.9" fill="none" stroke-linecap="round"/><circle cx="680.6" cy="654.3" r="1.2" fill="#1a1a1a"/><circle cx="684.6" cy="654.3" r="1.2" fill="#1a1a1a"/>
<path d="M671.5 660.8 L665.7 660.8 M668.6 660.8 L668.6 657.6" stroke="#1a1a1a" stroke-width="1.9" fill="none" stroke-linecap="round"/><path d="M665.7 660.8 L653.8 660.8 M663.3 660.8 L663.3 657.9 M659.7 660.8 L659.7 657.9 M656.2 660.8 L656.2 657.9" stroke="#1a1a1a" stroke-width="1.9" fill="none" stroke-linecap="round"/><ellipse cx="651.0" cy="659.2" rx="2.6" ry="1.8" fill="#1a1a1a"/><path d="M649.9 660.8 Q649.9 665.0 645.1 665.5" stroke="#1a1a1a" stroke-width="1.9" fill="none" stroke-linecap="round"/>
<path d="M635.3 650.3 Q634.3 655.5 634.8 660.8 L630.4 660.8" stroke="#1a1a1a" stroke-width="1.9" fill="none" stroke-linecap="round"/><path d="M639.1 660.8 L634.8 660.8" stroke="#1a1a1a" stroke-width="1.9" fill="none" stroke-linecap="round"/><path d="M627.8 656.1 Q629.4 660.8 621.0 660.8" stroke="#1a1a1a" stroke-width="1.9" fill="none" stroke-linecap="round"/>
<ellipse cx="755.8" cy="675.7" rx="2.4" ry="1.8" fill="#1a1a1a"/><path d="M754.8 677.3 Q754.8 681.5 750.3 682.0" stroke="#1a1a1a" stroke-width="1.9" fill="none" stroke-linecap="round"/><path d="M750.3 677.3 L739.2 677.3 M748.1 677.3 L748.1 674.4 M744.8 677.3 L744.8 674.4 M741.5 677.3 L741.5 674.4" stroke="#1a1a1a" stroke-width="1.9" fill="none" stroke-linecap="round"/><path d="M739.2 677.3 L733.9 677.3 M736.6 677.3 L736.6 674.1" stroke="#1a1a1a" stroke-width="1.9" fill="none" stroke-linecap="round"/><circle cx="734.6" cy="681.0" r="1.2" fill="#1a1a1a"/><circle cx="738.6" cy="681.0" r="1.2" fill="#1a1a1a"/><path d="M733.9 676.2 Q733.2 681.0 727.4 681.7" stroke="#1a1a1a" stroke-width="1.9" fill="none" stroke-linecap="round"/><path d="M725.8 672.6 Q726.8 677.3 721.6 677.3" stroke="#1a1a1a" stroke-width="1.9" fill="none" stroke-linecap="round"/>
<path d="M712.2 666.6 Q711.2 672.0 711.7 677.8" stroke="#1a1a1a" stroke-width="1.9" fill="none" stroke-linecap="round"/><ellipse cx="703.8" cy="675.2" rx="3.4" ry="2.3" fill="#1a1a1a"/><circle cx="701.8" cy="670.8" r="1.2" fill="#1a1a1a"/><circle cx="705.8" cy="670.8" r="1.2" fill="#1a1a1a"/><path d="M699.3 677.3 L689.3 677.3" stroke="#1a1a1a" stroke-width="1.9" fill="none" stroke-linecap="round"/><ellipse cx="694.3" cy="675.2" rx="4.2" ry="2.1" fill="#1a1a1a"/><circle cx="694.3" cy="670.8" r="1.2" fill="#1a1a1a"/>
<path d="M680.3 666.8 Q679.3 672.0 679.8 677.3 L676.3 677.3" stroke="#1a1a1a" stroke-width="1.9" fill="none" stroke-linecap="round"/><path d="M683.3 677.3 L679.8 677.3" stroke="#1a1a1a" stroke-width="1.9" fill="none" stroke-linecap="round"/><path d="M674.2 672.6 Q675.4 677.3 668.7 677.3" stroke="#1a1a1a" stroke-width="1.9" fill="none" stroke-linecap="round"/><path d="M667.8 676.2 Q667.0 681.0 659.4 681.7" stroke="#1a1a1a" stroke-width="1.9" fill="none" stroke-linecap="round"/><ellipse cx="654.9" cy="675.2" rx="3.4" ry="2.3" fill="#1a1a1a"/><circle cx="652.9" cy="670.8" r="1.2" fill="#1a1a1a"/><circle cx="656.9" cy="670.8" r="1.2" fill="#1a1a1a"/>
<path d="M642.3 672.6 Q643.6 677.3 636.8 677.3" stroke="#1a1a1a" stroke-width="1.9" fill="none" stroke-linecap="round"/><path d="M636.0 677.3 L628.9 677.3 M632.5 677.3 L632.5 674.1" stroke="#1a1a1a" stroke-width="1.9" fill="none" stroke-linecap="round"/><ellipse cx="624.5" cy="675.2" rx="3.4" ry="2.3" fill="#1a1a1a"/><circle cx="622.5" cy="670.8" r="1.2" fill="#1a1a1a"/><circle cx="626.5" cy="670.8" r="1.2" fill="#1a1a1a"/>
<path d="M758.4 694.3 L750.5 694.3 M754.4 694.3 L754.4 691.1" stroke="#1a1a1a" stroke-width="1.9" fill="none" stroke-linecap="round"/><circle cx="752.4" cy="687.8" r="1.2" fill="#1a1a1a"/><circle cx="756.4" cy="687.8" r="1.2" fill="#1a1a1a"/><path d="M750.5 694.3 L742.5 694.3 M746.5 694.3 L746.5 691.1" stroke="#1a1a1a" stroke-width="1.9" fill="none" stroke-linecap="round"/><circle cx="744.5" cy="698.0" r="1.2" fill="#1a1a1a"/><circle cx="748.5" cy="698.0" r="1.2" fill="#1a1a1a"/><path d="M742.5 694.3 L734.6 694.3 M738.5 694.3 L738.5 691.1" stroke="#1a1a1a" stroke-width="1.9" fill="none" stroke-linecap="round"/><circle cx="736.5" cy="687.8" r="1.2" fill="#1a1a1a"/><circle cx="740.5" cy="687.8" r="1.2" fill="#1a1a1a"/><ellipse cx="729.5" cy="692.2" rx="3.8" ry="2.3" fill="#1a1a1a"/><circle cx="727.5" cy="687.8" r="1.2" fill="#1a1a1a"/><circle cx="731.5" cy="687.8" r="1.2" fill="#1a1a1a"/>
<path d="M716.7 683.6 Q715.7 689.0 716.2 694.8" stroke="#1a1a1a" stroke-width="1.9" fill="none" stroke-linecap="round"/><path d="M714.0 694.3 L703.9 694.3 M712.0 694.3 L712.0 691.4 M709.0 694.3 L709.0 691.4 M705.9 694.3 L705.9 691.4" stroke="#1a1a1a" stroke-width="1.9" fill="none" stroke-linecap="round"/><ellipse cx="701.4" cy="693.5" rx="2.5" ry="1.7" fill="#1a1a1a"/><path d="M703.9 694.3 L700.7 694.3 M699.4 694.3 Q697.5 695.3 697.1 699.5" stroke="#1a1a1a" stroke-width="1.9" fill="none" stroke-linecap="round"/><path d="M697.5 694.3 L690.7 694.3" stroke="#1a1a1a" stroke-width="1.9" fill="none" stroke-linecap="round"/><ellipse cx="694.1" cy="692.2" rx="2.9" ry="2.1" fill="#1a1a1a"/><ellipse cx="688.1" cy="693.5" rx="2.5" ry="1.7" fill="#1a1a1a"/><path d="M690.7 694.3 L687.4 694.3 M686.1 694.3 Q684.2 695.3 683.9 699.5" stroke="#1a1a1a" stroke-width="1.9" fill="none" stroke-linecap="round"/><ellipse cx="681.1" cy="692.2" rx="2.3" ry="2.3" fill="#1a1a1a"/><circle cx="679.1" cy="687.8" r="1.2" fill="#1a1a1a"/><circle cx="683.1" cy="687.8" r="1.2" fill="#1a1a1a"/><path d="M678.0 694.3 Q676.9 699.0 671.8 698.7 Q666.7 698.3 667.3 693.2" stroke="#1a1a1a" stroke-width="1.9" fill="none" stroke-linecap="round"/><path d="M666.7 694.3 L661.9 694.3 M664.3 694.3 L664.3 691.1" stroke="#1a1a1a" stroke-width="1.9" fill="none" stroke-linecap="round"/><circle cx="662.3" cy="687.8" r="1.2" fill="#1a1a1a"/><circle cx="666.3" cy="687.8" r="1.2" fill="#1a1a1a"/>
<ellipse cx="653.0" cy="692.7" rx="2.7" ry="1.8" fill="#1a1a1a"/><path d="M651.9 694.3 Q651.9 698.5 647.0 699.0" stroke="#1a1a1a" stroke-width="1.9" fill="none" stroke-linecap="round"/><path d="M647.0 694.3 L641.0 694.3 M644.0 694.3 L644.0 691.1" stroke="#1a1a1a" stroke-width="1.9" fill="none" stroke-linecap="round"/><circle cx="642.0" cy="687.8" r="1.2" fill="#1a1a1a"/><circle cx="646.0" cy="687.8" r="1.2" fill="#1a1a1a"/><path d="M639.2 689.6 Q640.3 694.3 634.6 694.3" stroke="#1a1a1a" stroke-width="1.9" fill="none" stroke-linecap="round"/><path d="M633.9 694.3 L627.9 694.3 M630.9 694.3 L630.9 691.1" stroke="#1a1a1a" stroke-width="1.9" fill="none" stroke-linecap="round"/><circle cx="630.9" cy="687.8" r="1.2" fill="#1a1a1a"/><ellipse cx="624.8" cy="693.5" rx="3.0" ry="1.7" fill="#1a1a1a"/><path d="M627.9 694.3 L624.0 694.3 M622.4 694.3 Q620.0 695.3 619.6 699.5" stroke="#1a1a1a" stroke-width="1.9" fill="none" stroke-linecap="round"/>
<path d="M758.4 711.4 L753.7 711.4 M756.0 711.4 L756.0 708.2" stroke="#1a1a1a" stroke-width="1.9" fill="none" stroke-linecap="round"/><circle cx="754.0" cy="715.1" r="1.2" fill="#1a1a1a"/><circle cx="758.0" cy="715.1" r="1.2" fill="#1a1a1a"/><path d="M753.7 711.4 Q752.5 716.1 747.6 715.8 Q742.6 715.4 743.1 710.4" stroke="#1a1a1a" stroke-width="1.9" fill="none" stroke-linecap="round"/>
<path d="M733.1 700.9 Q732.1 706.1 732.6 711.4 L728.6 711.4" stroke="#1a1a1a" stroke-width="1.9" fill="none" stroke-linecap="round"/><path d="M736.6 711.4 L732.6 711.4" stroke="#1a1a1a" stroke-width="1.9" fill="none" stroke-linecap="round"/><path d="M728.6 710.4 Q727.6 715.1 719.0 715.8" stroke="#1a1a1a" stroke-width="1.9" fill="none" stroke-linecap="round"/>
<path d="M713.0 711.4 L707.7 711.4 M710.4 711.4 L710.4 708.2" stroke="#1a1a1a" stroke-width="1.9" fill="none" stroke-linecap="round"/><circle cx="710.4" cy="704.9" r="1.2" fill="#1a1a1a"/><path d="M707.7 711.4 L700.1 711.4" stroke="#1a1a1a" stroke-width="1.9" fill="none" stroke-linecap="round"/><ellipse cx="703.9" cy="709.3" rx="3.2" ry="2.1" fill="#1a1a1a"/><path d="M700.1 711.4 L689.0 711.4 M697.9 711.4 L697.9 708.5 M694.5 711.4 L694.5 708.5 M691.2 711.4 L691.2 708.5" stroke="#1a1a1a" stroke-width="1.9" fill="none" stroke-linecap="round"/><path d="M689.0 711.4 L683.6 711.4 M686.3 711.4 L686.3 708.2" stroke="#1a1a1a" stroke-width="1.9" fill="none" stroke-linecap="round"/><circle cx="684.3" cy="704.9" r="1.2" fill="#1a1a1a"/><circle cx="688.3" cy="704.9" r="1.2" fill="#1a1a1a"/>
<ellipse cx="674.2" cy="709.8" rx="3.2" ry="1.8" fill="#1a1a1a"/><path d="M672.8 711.4 Q672.8 715.6 667.0 716.1" stroke="#1a1a1a" stroke-width="1.9" fill="none" stroke-linecap="round"/><path d="M667.0 711.4 L659.9 711.4 M663.4 711.4 L663.4 708.2" stroke="#1a1a1a" stroke-width="1.9" fill="none" stroke-linecap="round"/><circle cx="663.4" cy="704.9" r="1.2" fill="#1a1a1a"/><path d="M657.1 700.7 Q656.1 706.1 656.6 711.9" stroke="#1a1a1a" stroke-width="1.9" fill="none" stroke-linecap="round"/>
<path d="M644.7 700.9 Q643.7 706.1 644.2 711.4 L641.0 711.4" stroke="#1a1a1a" stroke-width="1.9" fill="none" stroke-linecap="round"/><path d="M647.3 711.4 L644.2 711.4" stroke="#1a1a1a" stroke-width="1.9" fill="none" stroke-linecap="round"/><ellipse cx="637.0" cy="709.3" rx="3.0" ry="2.3" fill="#1a1a1a"/><circle cx="635.0" cy="704.9" r="1.2" fill="#1a1a1a"/><circle cx="639.0" cy="704.9" r="1.2" fill="#1a1a1a"/><path d="M633.0 711.4 L620.0 711.4 M630.4 711.4 L630.4 708.5 M626.5 711.4 L626.5 708.5 M622.6 711.4 L622.6 708.5" stroke="#1a1a1a" stroke-width="1.9" fill="none" stroke-linecap="round"/>
<path d="M755.8 716.8 Q754.8 722.0 755.3 727.3 L752.3 727.3" stroke="#1a1a1a" stroke-width="1.9" fill="none" stroke-linecap="round"/><path d="M758.4 727.3 L755.3 727.3" stroke="#1a1a1a" stroke-width="1.9" fill="none" stroke-linecap="round"/><path d="M749.9 716.6 Q748.9 722.0 749.4 727.8" stroke="#1a1a1a" stroke-width="1.9" fill="none" stroke-linecap="round"/><path d="M746.5 727.3 Q745.1 732.0 738.6 731.7 Q732.2 731.3 732.9 726.2" stroke="#1a1a1a" stroke-width="1.9" fill="none" stroke-linecap="round"/><path d="M730.3 722.6 Q731.4 727.3 725.5 727.3" stroke="#1a1a1a" stroke-width="1.9" fill="none" stroke-linecap="round"/><path d="M722.4 716.6 Q721.4 722.0 721.9 727.8" stroke="#1a1a1a" stroke-width="1.9" fill="none" stroke-linecap="round"/>
<path d="M713.1 727.3 L705.1 727.3 M709.1 727.3 L709.1 724.1" stroke="#1a1a1a" stroke-width="1.9" fill="none" stroke-linecap="round"/><circle cx="707.1" cy="720.8" r="1.2" fill="#1a1a1a"/><circle cx="711.1" cy="720.8" r="1.2" fill="#1a1a1a"/><path d="M705.1 727.3 L697.1 727.3 M701.1 727.3 L701.1 724.1" stroke="#1a1a1a" stroke-width="1.9" fill="none" stroke-linecap="round"/><circle cx="699.1" cy="720.8" r="1.2" fill="#1a1a1a"/><circle cx="703.1" cy="720.8" r="1.2" fill="#1a1a1a"/><path d="M697.1 727.3 L689.1 727.3 M693.1 727.3 L693.1 724.1" stroke="#1a1a1a" stroke-width="1.9" fill="none" stroke-linecap="round"/><circle cx="691.1" cy="731.0" r="1.2" fill="#1a1a1a"/><circle cx="695.1" cy="731.0" r="1.2" fill="#1a1a1a"/><path d="M689.1 727.3 L681.2 727.3 M685.2 727.3 L685.2 724.1" stroke="#1a1a1a" stroke-width="1.9" fill="none" stroke-linecap="round"/><circle cx="683.2" cy="731.0" r="1.2" fill="#1a1a1a"/><circle cx="687.2" cy="731.0" r="1.2" fill="#1a1a1a"/><path d="M677.9 716.6 Q676.9 722.0 677.4 727.8" stroke="#1a1a1a" stroke-width="1.9" fill="none" stroke-linecap="round"/>
<path d="M665.0 716.8 Q664.0 722.0 664.5 727.3 L661.3 727.3" stroke="#1a1a1a" stroke-width="1.9" fill="none" stroke-linecap="round"/><path d="M667.7 727.3 L664.5 727.3" stroke="#1a1a1a" stroke-width="1.9" fill="none" stroke-linecap="round"/><path d="M661.3 727.3 L652.2 727.3" stroke="#1a1a1a" stroke-width="1.9" fill="none" stroke-linecap="round"/><ellipse cx="656.8" cy="725.2" rx="3.8" ry="2.1" fill="#1a1a1a"/><circle cx="656.8" cy="720.8" r="1.2" fill="#1a1a1a"/><path d="M652.2 726.2 Q651.5 731.0 644.5 731.7" stroke="#1a1a1a" stroke-width="1.9" fill="none" stroke-linecap="round"/><path d="M644.5 727.3 L635.5 727.3" stroke="#1a1a1a" stroke-width="1.9" fill="none" stroke-linecap="round"/><ellipse cx="640.0" cy="725.2" rx="3.8" ry="2.1" fill="#1a1a1a"/><circle cx="640.0" cy="720.8" r="1.2" fill="#1a1a1a"/><path d="M635.5 727.3 L626.4 727.3" stroke="#1a1a1a" stroke-width="1.9" fill="none" stroke-linecap="round"/><ellipse cx="631.0" cy="725.2" rx="3.8" ry="2.1" fill="#1a1a1a"/><circle cx="631.0" cy="720.8" r="1.2" fill="#1a1a1a"/><path d="M623.7 716.8 Q622.7 722.0 623.2 727.3 L620.0 727.3" stroke="#1a1a1a" stroke-width="1.9" fill="none" stroke-linecap="round"/><path d="M626.4 727.3 L623.2 727.3" stroke="#1a1a1a" stroke-width="1.9" fill="none" stroke-linecap="round"/>
<path d="M758.4 744.4 L749.9 744.4" stroke="#1a1a1a" stroke-width="1.9" fill="none" stroke-linecap="round"/><ellipse cx="754.1" cy="742.3" rx="3.6" ry="2.1" fill="#1a1a1a"/><path d="M747.3 733.9 Q746.3 739.1 746.8 744.4 L743.8 744.4" stroke="#1a1a1a" stroke-width="1.9" fill="none" stroke-linecap="round"/><path d="M749.9 744.4 L746.8 744.4" stroke="#1a1a1a" stroke-width="1.9" fill="none" stroke-linecap="round"/><path d="M743.8 744.4 L737.7 744.4 M740.7 744.4 L740.7 741.2" stroke="#1a1a1a" stroke-width="1.9" fill="none" stroke-linecap="round"/><circle cx="740.7" cy="737.9" r="1.2" fill="#1a1a1a"/><path d="M737.7 744.4 L729.1 744.4" stroke="#1a1a1a" stroke-width="1.9" fill="none" stroke-linecap="round"/><ellipse cx="733.4" cy="742.3" rx="3.6" ry="2.1" fill="#1a1a1a"/>
<path d="M721.4 733.7 Q720.4 739.1 720.9 744.9" stroke="#1a1a1a" stroke-width="1.9" fill="none" stroke-linecap="round"/><path d="M718.7 744.4 L712.0 744.4" stroke="#1a1a1a" stroke-width="1.9" fill="none" stroke-linecap="round"/><ellipse cx="715.3" cy="742.3" rx="2.8" ry="2.1" fill="#1a1a1a"/><circle cx="715.3" cy="737.9" r="1.2" fill="#1a1a1a"/><path d="M712.0 744.4 L702.1 744.4 M710.0 744.4 L710.0 741.5 M707.0 744.4 L707.0 741.5 M704.0 744.4 L704.0 741.5" stroke="#1a1a1a" stroke-width="1.9" fill="none" stroke-linecap="round"/>
<path d="M696.1 744.4 L688.2 744.4 M692.1 744.4 L692.1 741.2" stroke="#1a1a1a" stroke-width="1.9" fill="none" stroke-linecap="round"/><circle cx="690.1" cy="748.1" r="1.2" fill="#1a1a1a"/><circle cx="694.1" cy="748.1" r="1.2" fill="#1a1a1a"/><path d="M684.7 733.9 Q683.7 739.1 684.2 744.4 L680.2 744.4" stroke="#1a1a1a" stroke-width="1.9" fill="none" stroke-linecap="round"/><path d="M688.2 744.4 L684.2 744.4" stroke="#1a1a1a" stroke-width="1.9" fill="none" stroke-linecap="round"/><path d="M680.2 744.4 L672.3 744.4 M676.3 744.4 L676.3 741.2" stroke="#1a1a1a" stroke-width="1.9" fill="none" stroke-linecap="round"/><path d="M672.3 744.4 L664.4 744.4 M668.4 744.4 L668.4 741.2" stroke="#1a1a1a" stroke-width="1.9" fill="none" stroke-linecap="round"/><circle cx="666.4" cy="737.9" r="1.2" fill="#1a1a1a"/><circle cx="670.4" cy="737.9" r="1.2" fill="#1a1a1a"/>
<path d="M666.2 594.6 Q665.4 600.5 658.2 601.4" stroke="rgba(90,70,10,.55)" stroke-width="1.4" fill="none" stroke-linecap="round"/><path d="M655.4 582.9 Q654.4 589.4 654.9 595.9 L651.6 595.9" stroke="rgba(90,70,10,.55)" stroke-width="1.4" fill="none" stroke-linecap="round"/><path d="M658.2 595.9 L654.9 595.9" stroke="rgba(90,70,10,.55)" stroke-width="1.4" fill="none" stroke-linecap="round"/><path d="M649.0 582.6 Q648.0 589.4 648.5 596.4" stroke="rgba(90,70,10,.55)" stroke-width="1.4" fill="none" stroke-linecap="round"/><path d="M642.7 582.6 Q641.7 589.4 642.2 596.4" stroke="rgba(90,70,10,.55)" stroke-width="1.4" fill="none" stroke-linecap="round"/><ellipse cx="635.6" cy="594.9" rx="3.4" ry="2.1" fill="rgba(90,70,10,.55)"/><path d="M639.1 595.9 L634.7 595.9 M632.9 595.9 Q630.2 597.2 629.8 602.4" stroke="rgba(90,70,10,.55)" stroke-width="1.4" fill="none" stroke-linecap="round"/>
<path d="M752.0 595.2 L741.5 595.2 M749.9 595.2 L749.9 591.5 M746.7 595.2 L746.7 591.5 M743.6 595.2 L743.6 591.5" stroke="rgba(255,230,210,.65)" stroke-width="1.4" fill="none" stroke-linecap="round"/><ellipse cx="738.8" cy="594.1" rx="2.6" ry="2.1" fill="rgba(255,230,210,.65)"/><path d="M741.5 595.2 L738.1 595.2 M736.7 595.2 Q734.7 596.5 734.4 601.7" stroke="rgba(255,230,210,.65)" stroke-width="1.4" fill="none" stroke-linecap="round"/><path d="M734.7 595.2 L729.6 595.2 M732.2 595.2 L732.2 591.3" stroke="rgba(255,230,210,.65)" stroke-width="1.4" fill="none" stroke-linecap="round"/><path d="M728.1 589.3 Q729.0 595.2 724.2 595.2" stroke="rgba(255,230,210,.65)" stroke-width="1.4" fill="none" stroke-linecap="round"/><ellipse cx="721.1" cy="593.2" rx="2.3" ry="2.2" fill="rgba(255,230,210,.65)"/><path d="M720.1 595.2 Q720.1 600.4 716.0 601.0" stroke="rgba(255,230,210,.65)" stroke-width="1.4" fill="none" stroke-linecap="round"/>
<path d="M813.8 657.0 L807.9 657.0 M810.9 657.0 L810.9 653.1" stroke="rgba(255,210,220,.55)" stroke-width="1.4" fill="none" stroke-linecap="round"/><circle cx="808.9" cy="649.0" r="1.2" fill="rgba(255,210,220,.55)"/><circle cx="812.9" cy="649.0" r="1.2" fill="rgba(255,210,220,.55)"/><ellipse cx="804.7" cy="656.0" rx="3.0" ry="2.1" fill="rgba(255,210,220,.55)"/><path d="M807.9 657.0 L803.9 657.0 M802.3 657.0 Q799.9 658.3 799.5 663.5" stroke="rgba(255,210,220,.55)" stroke-width="1.4" fill="none" stroke-linecap="round"/><ellipse cx="797.1" cy="655.1" rx="2.7" ry="2.2" fill="rgba(255,210,220,.55)"/><path d="M795.9 657.0 Q795.9 662.2 791.0 662.9" stroke="rgba(255,210,220,.55)" stroke-width="1.4" fill="none" stroke-linecap="round"/><path d="M791.0 657.0 L785.0 657.0 M788.0 657.0 L788.0 653.1" stroke="rgba(255,210,220,.55)" stroke-width="1.4" fill="none" stroke-linecap="round"/><circle cx="786.0" cy="649.0" r="1.2" fill="rgba(255,210,220,.55)"/><circle cx="790.0" cy="649.0" r="1.2" fill="rgba(255,210,220,.55)"/><path d="M785.0 655.7 Q784.3 661.6 777.8 662.5" stroke="rgba(255,210,220,.55)" stroke-width="1.4" fill="none" stroke-linecap="round"/>
<path d="M813.8 741.0 L803.3 741.0 M811.7 741.0 L811.7 737.3 M808.6 741.0 L808.6 737.3 M805.4 741.0 L805.4 737.3" stroke="rgba(255,220,240,.6)" stroke-width="1.4" fill="none" stroke-linecap="round"/><path d="M803.3 741.0 L798.2 741.0 M800.8 741.0 L800.8 737.1" stroke="rgba(255,220,240,.6)" stroke-width="1.4" fill="none" stroke-linecap="round"/><path d="M798.2 741.0 L791.1 741.0" stroke="rgba(255,220,240,.6)" stroke-width="1.4" fill="none" stroke-linecap="round"/><ellipse cx="794.7" cy="738.4" rx="3.0" ry="2.6" fill="rgba(255,220,240,.6)"/><circle cx="794.7" cy="732.9" r="1.2" fill="rgba(255,220,240,.6)"/><path d="M789.6 735.1 Q790.5 741.0 785.6 741.0" stroke="rgba(255,220,240,.6)" stroke-width="1.4" fill="none" stroke-linecap="round"/><path d="M785.0 741.0 L777.8 741.0" stroke="rgba(255,220,240,.6)" stroke-width="1.4" fill="none" stroke-linecap="round"/><ellipse cx="781.4" cy="738.4" rx="3.0" ry="2.6" fill="rgba(255,220,240,.6)"/><circle cx="781.4" cy="732.9" r="1.2" fill="rgba(255,220,240,.6)"/>
<path d="M751.1 789.1 Q750.1 795.6 750.6 802.1 L747.5 802.1" stroke="rgba(220,235,255,.65)" stroke-width="1.4" fill="none" stroke-linecap="round"/><path d="M753.8 802.1 L750.6 802.1" stroke="rgba(220,235,255,.65)" stroke-width="1.4" fill="none" stroke-linecap="round"/><path d="M747.5 802.1 L738.7 802.1" stroke="rgba(220,235,255,.65)" stroke-width="1.4" fill="none" stroke-linecap="round"/><ellipse cx="743.1" cy="799.5" rx="3.7" ry="2.6" fill="rgba(220,235,255,.65)"/><circle cx="743.1" cy="794.0" r="1.2" fill="rgba(220,235,255,.65)"/><path d="M738.7 802.1 L729.9 802.1" stroke="rgba(220,235,255,.65)" stroke-width="1.4" fill="none" stroke-linecap="round"/><ellipse cx="734.3" cy="799.5" rx="3.7" ry="2.6" fill="rgba(220,235,255,.65)"/><circle cx="734.3" cy="794.0" r="1.2" fill="rgba(220,235,255,.65)"/><path d="M729.9 802.1 L723.6 802.1 M726.8 802.1 L726.8 798.2" stroke="rgba(220,235,255,.65)" stroke-width="1.4" fill="none" stroke-linecap="round"/><circle cx="724.8" cy="794.0" r="1.2" fill="rgba(220,235,255,.65)"/><circle cx="728.8" cy="794.0" r="1.2" fill="rgba(220,235,255,.65)"/><path d="M721.2 788.8 Q720.2 795.6 720.7 802.6" stroke="rgba(220,235,255,.65)" stroke-width="1.4" fill="none" stroke-linecap="round"/>
<path d="M668.0 802.8 L663.3 802.8 M665.7 802.8 L665.7 798.9" stroke="rgba(220,230,255,.6)" stroke-width="1.4" fill="none" stroke-linecap="round"/><circle cx="665.7" cy="794.8" r="1.2" fill="rgba(220,230,255,.6)"/><path d="M663.3 802.8 Q662.3 808.7 657.3 808.3 Q652.4 807.8 652.9 801.5" stroke="rgba(220,230,255,.6)" stroke-width="1.4" fill="none" stroke-linecap="round"/><path d="M652.4 802.8 L642.7 802.8 M650.5 802.8 L650.5 799.2 M647.5 802.8 L647.5 799.2 M644.6 802.8 L644.6 799.2" stroke="rgba(220,230,255,.6)" stroke-width="1.4" fill="none" stroke-linecap="round"/><ellipse cx="639.7" cy="800.2" rx="2.3" ry="2.9" fill="rgba(220,230,255,.6)"/><circle cx="637.7" cy="794.8" r="1.2" fill="rgba(220,230,255,.6)"/><circle cx="641.7" cy="794.8" r="1.2" fill="rgba(220,230,255,.6)"/><path d="M636.7 802.8 L632.0 802.8 M634.4 802.8 L634.4 798.9" stroke="rgba(220,230,255,.6)" stroke-width="1.4" fill="none" stroke-linecap="round"/><circle cx="634.4" cy="794.8" r="1.2" fill="rgba(220,230,255,.6)"/>
<path d="M606.9 742.8 L600.2 742.8 M603.5 742.8 L603.5 738.9" stroke="rgba(70,40,10,.5)" stroke-width="1.4" fill="none" stroke-linecap="round"/><circle cx="601.5" cy="747.3" r="1.2" fill="rgba(70,40,10,.5)"/><circle cx="605.5" cy="747.3" r="1.2" fill="rgba(70,40,10,.5)"/><path d="M597.5 729.5 Q596.5 736.3 597.0 743.3" stroke="rgba(70,40,10,.5)" stroke-width="1.4" fill="none" stroke-linecap="round"/><path d="M593.9 742.8 L587.1 742.8 M590.5 742.8 L590.5 738.9" stroke="rgba(70,40,10,.5)" stroke-width="1.4" fill="none" stroke-linecap="round"/><circle cx="588.5" cy="734.7" r="1.2" fill="rgba(70,40,10,.5)"/><circle cx="592.5" cy="734.7" r="1.2" fill="rgba(70,40,10,.5)"/><path d="M587.1 742.8 L580.4 742.8 M583.7 742.8 L583.7 738.9" stroke="rgba(70,40,10,.5)" stroke-width="1.4" fill="none" stroke-linecap="round"/><path d="M580.4 742.8 L570.9 742.8" stroke="rgba(70,40,10,.5)" stroke-width="1.4" fill="none" stroke-linecap="round"/><ellipse cx="575.6" cy="740.2" rx="4.0" ry="2.6" fill="rgba(70,40,10,.5)"/><circle cx="575.6" cy="734.7" r="1.2" fill="rgba(70,40,10,.5)"/>
<path d="M603.5 644.0 Q602.5 650.5 603.0 657.0 L599.9 657.0" stroke="rgba(90,40,10,.5)" stroke-width="1.4" fill="none" stroke-linecap="round"/><path d="M606.2 657.0 L603.0 657.0" stroke="rgba(90,40,10,.5)" stroke-width="1.4" fill="none" stroke-linecap="round"/><ellipse cx="595.9" cy="654.4" rx="3.0" ry="2.9" fill="rgba(90,40,10,.5)"/><circle cx="593.9" cy="649.0" r="1.2" fill="rgba(90,40,10,.5)"/><circle cx="597.9" cy="649.0" r="1.2" fill="rgba(90,40,10,.5)"/><path d="M590.0 651.2 Q591.2 657.0 585.1 657.0" stroke="rgba(90,40,10,.5)" stroke-width="1.4" fill="none" stroke-linecap="round"/><ellipse cx="580.4" cy="654.4" rx="3.0" ry="2.9" fill="rgba(90,40,10,.5)"/><circle cx="578.4" cy="649.0" r="1.2" fill="rgba(90,40,10,.5)"/><circle cx="582.4" cy="649.0" r="1.2" fill="rgba(90,40,10,.5)"/><path d="M573.8 644.0 Q572.8 650.5 573.3 657.0 L570.2 657.0" stroke="rgba(90,40,10,.5)" stroke-width="1.4" fill="none" stroke-linecap="round"/><path d="M576.4 657.0 L573.3 657.0" stroke="rgba(90,40,10,.5)" stroke-width="1.4" fill="none" stroke-linecap="round"/>
<path d="M520.0 610.6 L510.3 611.4 Q518.7 616.0 516.1 624.0 Q513.5 628.0 507.0 625.0" stroke="#161616" stroke-width="1.8" fill="none" stroke-linecap="round"/><circle cx="513.5" cy="606.6" r="1.2" fill="#161616"/><ellipse cx="503.6" cy="616.0" rx="3.2" ry="3.4" fill="#161616"/><path d="M502.3 619.0 Q502.3 627.0 496.4 628.0" stroke="#161616" stroke-width="1.8" fill="none" stroke-linecap="round"/><path d="M494.3 610.0 Q495.6 619.0 488.8 619.0" stroke="#161616" stroke-width="1.8" fill="none" stroke-linecap="round"/><ellipse cx="483.5" cy="615.0" rx="3.4" ry="4.4" fill="#161616"/><circle cx="481.5" cy="606.6" r="1.2" fill="#161616"/><circle cx="485.5" cy="606.6" r="1.2" fill="#161616"/>
<path d="M555.5 627.6 Q554.5 639.0 555.0 650.5" stroke="#161616" stroke-width="1.8" fill="none" stroke-linecap="round"/><path d="M549.4 628.0 Q548.4 639.0 548.9 650.0 L545.7 650.0" stroke="#161616" stroke-width="1.8" fill="none" stroke-linecap="round"/><path d="M552.1 650.0 L548.9 650.0" stroke="#161616" stroke-width="1.8" fill="none" stroke-linecap="round"/><path d="M545.7 650.0 L539.3 650.0 M542.5 650.0 L542.5 643.4" stroke="#161616" stroke-width="1.8" fill="none" stroke-linecap="round"/><circle cx="540.5" cy="636.4" r="1.2" fill="#161616"/><circle cx="544.5" cy="636.4" r="1.2" fill="#161616"/><path d="M539.3 650.0 L530.4 650.0" stroke="#161616" stroke-width="1.8" fill="none" stroke-linecap="round"/><ellipse cx="534.8" cy="645.6" rx="3.7" ry="4.4" fill="#161616"/><path d="M527.7 628.0 Q526.7 639.0 527.2 650.0 L524.0 650.0" stroke="#161616" stroke-width="1.8" fill="none" stroke-linecap="round"/><path d="M530.4 650.0 L527.2 650.0" stroke="#161616" stroke-width="1.8" fill="none" stroke-linecap="round"/><path d="M524.0 650.0 L517.6 650.0 M520.8 650.0 L520.8 643.4" stroke="#161616" stroke-width="1.8" fill="none" stroke-linecap="round"/><circle cx="518.8" cy="657.7" r="1.2" fill="#161616"/><circle cx="522.8" cy="657.7" r="1.2" fill="#161616"/><ellipse cx="514.2" cy="648.2" rx="3.2" ry="3.5" fill="#161616"/><path d="M517.6 650.0 L513.4 650.0 M511.7 650.0 Q509.2 652.2 508.7 661.0" stroke="#161616" stroke-width="1.8" fill="none" stroke-linecap="round"/><ellipse cx="496.5" cy="646.7" rx="2.9" ry="3.7" fill="#161616"/><path d="M495.3 650.0 Q495.3 658.8 490.0 659.9" stroke="#161616" stroke-width="1.8" fill="none" stroke-linecap="round"/><path d="M478.0 627.6 Q477.0 639.0 477.5 650.5" stroke="#161616" stroke-width="1.8" fill="none" stroke-linecap="round"/><path d="M471.8 628.0 Q470.8 639.0 471.3 650.0 L468.2 650.0" stroke="#161616" stroke-width="1.8" fill="none" stroke-linecap="round"/><path d="M474.5 650.0 L471.3 650.0" stroke="#161616" stroke-width="1.8" fill="none" stroke-linecap="round"/><path d="M468.2 650.0 L461.8 650.0 M465.0 650.0 L465.0 643.4" stroke="#161616" stroke-width="1.8" fill="none" stroke-linecap="round"/><circle cx="463.0" cy="636.4" r="1.2" fill="#161616"/><circle cx="467.0" cy="636.4" r="1.2" fill="#161616"/><path d="M461.8 650.0 L452.9 650.0" stroke="#161616" stroke-width="1.8" fill="none" stroke-linecap="round"/><ellipse cx="457.3" cy="645.6" rx="3.7" ry="4.4" fill="#161616"/><path d="M450.2 628.0 Q449.2 639.0 449.7 650.0 L446.5 650.0" stroke="#161616" stroke-width="1.8" fill="none" stroke-linecap="round"/><path d="M452.9 650.0 L449.7 650.0" stroke="#161616" stroke-width="1.8" fill="none" stroke-linecap="round"/><ellipse cx="443.1" cy="648.2" rx="3.2" ry="3.5" fill="#161616"/><path d="M446.5 650.0 L442.2 650.0 M440.5 650.0 Q438.0 652.2 437.6 661.0" stroke="#161616" stroke-width="1.8" fill="none" stroke-linecap="round"/>
<path d="M898.0 586.6 Q897.0 598.0 897.5 609.5" stroke="#161616" stroke-width="1.8" fill="none" stroke-linecap="round"/><path d="M894.0 609.0 L883.5 609.0" stroke="#161616" stroke-width="1.8" fill="none" stroke-linecap="round"/><ellipse cx="888.8" cy="604.6" rx="4.4" ry="4.4" fill="#161616"/><circle cx="888.8" cy="595.4" r="1.2" fill="#161616"/><path d="M883.5 609.0 L873.0 609.0" stroke="#161616" stroke-width="1.8" fill="none" stroke-linecap="round"/><ellipse cx="878.2" cy="604.6" rx="4.4" ry="4.4" fill="#161616"/><circle cx="878.2" cy="595.4" r="1.2" fill="#161616"/><path d="M869.8 587.0 Q868.8 598.0 869.2 609.0 L865.5 609.0" stroke="#161616" stroke-width="1.8" fill="none" stroke-linecap="round"/><path d="M873.0 609.0 L869.2 609.0" stroke="#161616" stroke-width="1.8" fill="none" stroke-linecap="round"/><path d="M865.5 609.0 Q863.8 618.9 855.9 618.2 Q848.0 617.4 848.9 606.8" stroke="#161616" stroke-width="1.8" fill="none" stroke-linecap="round"/>
<path d="M915.6 617.6 Q914.6 629.0 915.1 640.5" stroke="#161616" stroke-width="1.8" fill="none" stroke-linecap="round"/><path d="M907.5 618.0 Q906.5 629.0 907.0 640.0 L902.8 640.0" stroke="#161616" stroke-width="1.8" fill="none" stroke-linecap="round"/><path d="M911.2 640.0 L907.0 640.0" stroke="#161616" stroke-width="1.8" fill="none" stroke-linecap="round"/><path d="M902.8 640.0 L891.1 640.0" stroke="#161616" stroke-width="1.8" fill="none" stroke-linecap="round"/><ellipse cx="896.9" cy="635.6" rx="4.9" ry="4.4" fill="#161616"/><path d="M891.1 640.0 L879.4 640.0" stroke="#161616" stroke-width="1.8" fill="none" stroke-linecap="round"/><ellipse cx="885.2" cy="635.6" rx="4.9" ry="4.4" fill="#161616"/><path d="M876.0 617.6 Q875.0 629.0 875.5 640.5" stroke="#161616" stroke-width="1.8" fill="none" stroke-linecap="round"/><path d="M871.5 637.8 Q870.5 647.7 861.5 649.2" stroke="#161616" stroke-width="1.8" fill="none" stroke-linecap="round"/><path d="M861.5 640.0 L844.2 640.0 M858.0 640.0 L858.0 633.8 M852.8 640.0 L852.8 633.8 M847.7 640.0 L847.7 633.8" stroke="#161616" stroke-width="1.8" fill="none" stroke-linecap="round"/><path d="M840.8 617.6 Q839.8 629.0 840.3 640.5" stroke="#161616" stroke-width="1.8" fill="none" stroke-linecap="round"/><path d="M836.4 640.0 L828.0 640.0 M832.2 640.0 L832.2 633.4" stroke="#161616" stroke-width="1.8" fill="none" stroke-linecap="round"/><circle cx="830.2" cy="626.4" r="1.2" fill="#161616"/><circle cx="834.2" cy="626.4" r="1.2" fill="#161616"/>
<path d="M921.4 737.6 Q920.4 749.0 920.9 760.5" stroke="#161616" stroke-width="1.8" fill="none" stroke-linecap="round"/><path d="M915.8 750.1 Q917.0 760.0 910.7 760.0" stroke="#161616" stroke-width="1.8" fill="none" stroke-linecap="round"/><path d="M907.3 737.6 Q906.3 749.0 906.8 760.5" stroke="#161616" stroke-width="1.8" fill="none" stroke-linecap="round"/><path d="M903.7 757.8 Q902.9 767.7 895.7 769.2" stroke="#161616" stroke-width="1.8" fill="none" stroke-linecap="round"/><ellipse cx="891.5" cy="755.6" rx="3.2" ry="4.8" fill="#161616"/><circle cx="889.5" cy="746.4" r="1.2" fill="#161616"/><circle cx="893.5" cy="746.4" r="1.2" fill="#161616"/><path d="M874.8 737.6 Q873.8 749.0 874.3 760.5" stroke="#161616" stroke-width="1.8" fill="none" stroke-linecap="round"/><path d="M868.4 738.0 Q867.4 749.0 867.9 760.0 L864.6 760.0" stroke="#161616" stroke-width="1.8" fill="none" stroke-linecap="round"/><path d="M871.2 760.0 L867.9 760.0" stroke="#161616" stroke-width="1.8" fill="none" stroke-linecap="round"/><path d="M862.0 737.6 Q861.0 749.0 861.5 760.5" stroke="#161616" stroke-width="1.8" fill="none" stroke-linecap="round"/><path d="M856.4 750.1 Q857.6 760.0 851.3 760.0" stroke="#161616" stroke-width="1.8" fill="none" stroke-linecap="round"/><path d="M847.9 737.6 Q846.9 749.0 847.4 760.5" stroke="#161616" stroke-width="1.8" fill="none" stroke-linecap="round"/><path d="M844.3 760.0 L835.0 760.0" stroke="#161616" stroke-width="1.8" fill="none" stroke-linecap="round"/><ellipse cx="839.6" cy="755.6" rx="3.9" ry="4.4" fill="#161616"/>
<path d="M541.9 724.6 Q540.9 735.0 541.4 745.5" stroke="#161616" stroke-width="1.8" fill="none" stroke-linecap="round"/><path d="M534.5 725.0 Q533.5 735.0 534.0 745.0 L530.1 745.0" stroke="#161616" stroke-width="1.8" fill="none" stroke-linecap="round"/><path d="M537.8 745.0 L534.0 745.0" stroke="#161616" stroke-width="1.8" fill="none" stroke-linecap="round"/><path d="M530.1 745.0 L522.4 745.0 M526.3 745.0 L526.3 739.0" stroke="#161616" stroke-width="1.8" fill="none" stroke-linecap="round"/><circle cx="524.3" cy="732.6" r="1.2" fill="#161616"/><circle cx="528.3" cy="732.6" r="1.2" fill="#161616"/><path d="M522.4 745.0 L511.7 745.0" stroke="#161616" stroke-width="1.8" fill="none" stroke-linecap="round"/><ellipse cx="517.1" cy="741.0" rx="4.5" ry="4.0" fill="#161616"/><circle cx="517.1" cy="732.6" r="1.2" fill="#161616"/><path d="M508.6 724.6 Q507.6 735.0 508.1 745.5" stroke="#161616" stroke-width="1.8" fill="none" stroke-linecap="round"/><path d="M504.5 745.0 L493.7 745.0" stroke="#161616" stroke-width="1.8" fill="none" stroke-linecap="round"/><ellipse cx="499.1" cy="741.0" rx="4.5" ry="4.0" fill="#161616"/><circle cx="499.1" cy="732.6" r="1.2" fill="#161616"/><ellipse cx="488.9" cy="741.0" rx="3.7" ry="4.4" fill="#161616"/><circle cx="486.9" cy="732.6" r="1.2" fill="#161616"/><circle cx="490.9" cy="732.6" r="1.2" fill="#161616"/>
<path d="M555.1 757.6 Q554.1 769.0 554.6 780.5" stroke="#161616" stroke-width="1.8" fill="none" stroke-linecap="round"/><path d="M548.0 758.0 Q547.0 769.0 547.5 780.0 L543.9 780.0" stroke="#161616" stroke-width="1.8" fill="none" stroke-linecap="round"/><path d="M551.2 780.0 L547.5 780.0" stroke="#161616" stroke-width="1.8" fill="none" stroke-linecap="round"/><path d="M543.9 780.0 L533.7 780.0" stroke="#161616" stroke-width="1.8" fill="none" stroke-linecap="round"/><ellipse cx="538.8" cy="775.6" rx="4.3" ry="4.4" fill="#161616"/><ellipse cx="530.2" cy="776.7" rx="3.3" ry="3.7" fill="#161616"/><path d="M528.7 780.0 Q528.7 788.8 522.7 789.9" stroke="#161616" stroke-width="1.8" fill="none" stroke-linecap="round"/><path d="M522.7 780.0 L507.6 780.0 M519.7 780.0 L519.7 773.8 M515.2 780.0 L515.2 773.8 M510.6 780.0 L510.6 773.8" stroke="#161616" stroke-width="1.8" fill="none" stroke-linecap="round"/><path d="M507.6 780.0 L492.5 780.0 M504.6 780.0 L504.6 773.8 M500.1 780.0 L500.1 773.8 M495.6 780.0 L495.6 773.8" stroke="#161616" stroke-width="1.8" fill="none" stroke-linecap="round"/><path d="M492.5 780.0 L485.2 780.0 M488.9 780.0 L488.9 773.4" stroke="#161616" stroke-width="1.8" fill="none" stroke-linecap="round"/><circle cx="486.9" cy="787.7" r="1.2" fill="#161616"/><circle cx="490.9" cy="787.7" r="1.2" fill="#161616"/><ellipse cx="480.6" cy="775.6" rx="3.5" ry="4.8" fill="#161616"/><circle cx="478.6" cy="766.4" r="1.2" fill="#161616"/><circle cx="482.6" cy="766.4" r="1.2" fill="#161616"/>
<path d="M648.5 829.6 Q647.5 841.0 648.0 852.5" stroke="#161616" stroke-width="1.8" fill="none" stroke-linecap="round"/><path d="M640.3 830.0 Q639.3 841.0 639.8 852.0 L635.6 852.0" stroke="#161616" stroke-width="1.8" fill="none" stroke-linecap="round"/><path d="M644.1 852.0 L639.8 852.0" stroke="#161616" stroke-width="1.8" fill="none" stroke-linecap="round"/><path d="M635.6 852.0 L627.1 852.0 M631.3 852.0 L631.3 845.4" stroke="#161616" stroke-width="1.8" fill="none" stroke-linecap="round"/><circle cx="629.3" cy="838.4" r="1.2" fill="#161616"/><circle cx="633.3" cy="838.4" r="1.2" fill="#161616"/><path d="M627.1 842.8 L615.4 843.6 Q625.5 848.7 622.4 857.5 Q619.3 861.9 611.5 858.6" stroke="#161616" stroke-width="1.8" fill="none" stroke-linecap="round"/><circle cx="619.3" cy="838.4" r="1.2" fill="#161616"/><path d="M607.7 830.0 Q606.7 841.0 607.2 852.0 L603.0 852.0" stroke="#161616" stroke-width="1.8" fill="none" stroke-linecap="round"/><path d="M611.5 852.0 L607.2 852.0" stroke="#161616" stroke-width="1.8" fill="none" stroke-linecap="round"/><path d="M603.0 852.0 L594.5 852.0 M598.7 852.0 L598.7 845.4" stroke="#161616" stroke-width="1.8" fill="none" stroke-linecap="round"/><circle cx="596.7" cy="859.7" r="1.2" fill="#161616"/><circle cx="600.7" cy="859.7" r="1.2" fill="#161616"/><path d="M590.7 830.0 Q589.7 841.0 590.2 852.0 L586.0 852.0" stroke="#161616" stroke-width="1.8" fill="none" stroke-linecap="round"/><path d="M594.5 852.0 L590.2 852.0" stroke="#161616" stroke-width="1.8" fill="none" stroke-linecap="round"/>
<path d="M643.6 859.6 Q642.6 870.0 643.1 880.5" stroke="#161616" stroke-width="1.8" fill="none" stroke-linecap="round"/><path d="M635.5 860.0 Q634.5 870.0 635.0 880.0 L630.8 880.0" stroke="#161616" stroke-width="1.8" fill="none" stroke-linecap="round"/><path d="M639.2 880.0 L635.0 880.0" stroke="#161616" stroke-width="1.8" fill="none" stroke-linecap="round"/><path d="M630.8 880.0 L619.0 880.0" stroke="#161616" stroke-width="1.8" fill="none" stroke-linecap="round"/><ellipse cx="624.9" cy="876.0" rx="4.9" ry="4.0" fill="#161616"/><circle cx="624.9" cy="867.6" r="1.2" fill="#161616"/><path d="M619.0 880.0 L607.2 880.0" stroke="#161616" stroke-width="1.8" fill="none" stroke-linecap="round"/><ellipse cx="613.1" cy="876.0" rx="4.9" ry="4.0" fill="#161616"/><path d="M603.8 859.6 Q602.8 870.0 603.3 880.5" stroke="#161616" stroke-width="1.8" fill="none" stroke-linecap="round"/><path d="M595.7 860.0 Q594.7 870.0 595.2 880.0 L591.0 880.0" stroke="#161616" stroke-width="1.8" fill="none" stroke-linecap="round"/><path d="M599.4 880.0 L595.2 880.0" stroke="#161616" stroke-width="1.8" fill="none" stroke-linecap="round"/>
<path d="M789.1 829.6 Q788.1 841.0 788.6 852.5" stroke="#161616" stroke-width="1.8" fill="none" stroke-linecap="round"/><path d="M782.1 830.0 Q781.1 841.0 781.6 852.0 L778.0 852.0" stroke="#161616" stroke-width="1.8" fill="none" stroke-linecap="round"/><path d="M785.2 852.0 L781.6 852.0" stroke="#161616" stroke-width="1.8" fill="none" stroke-linecap="round"/><path d="M778.0 852.0 L767.9 852.0" stroke="#161616" stroke-width="1.8" fill="none" stroke-linecap="round"/><ellipse cx="772.9" cy="847.6" rx="4.3" ry="4.4" fill="#161616"/><circle cx="770.9" cy="838.4" r="1.2" fill="#161616"/><circle cx="774.9" cy="838.4" r="1.2" fill="#161616"/><path d="M767.9 852.0 L760.6 852.0 M764.2 852.0 L764.2 845.4" stroke="#161616" stroke-width="1.8" fill="none" stroke-linecap="round"/><circle cx="762.2" cy="859.7" r="1.2" fill="#161616"/><circle cx="766.2" cy="859.7" r="1.2" fill="#161616"/><path d="M757.7 829.6 Q756.7 841.0 757.2 852.5" stroke="#161616" stroke-width="1.8" fill="none" stroke-linecap="round"/><path d="M751.7 842.1 Q753.0 852.0 746.0 852.0" stroke="#161616" stroke-width="1.8" fill="none" stroke-linecap="round"/><ellipse cx="740.6" cy="847.6" rx="3.5" ry="4.8" fill="#161616"/><circle cx="738.6" cy="838.4" r="1.2" fill="#161616"/><circle cx="742.6" cy="838.4" r="1.2" fill="#161616"/>
<path d="M789.5 859.6 Q788.5 870.0 789.0 880.5" stroke="#161616" stroke-width="1.8" fill="none" stroke-linecap="round"/><path d="M783.3 860.0 Q782.3 870.0 782.8 880.0 L779.6 880.0" stroke="#161616" stroke-width="1.8" fill="none" stroke-linecap="round"/><path d="M786.0 880.0 L782.8 880.0" stroke="#161616" stroke-width="1.8" fill="none" stroke-linecap="round"/><path d="M779.6 880.0 L770.6 880.0" stroke="#161616" stroke-width="1.8" fill="none" stroke-linecap="round"/><ellipse cx="775.1" cy="876.0" rx="3.8" ry="4.0" fill="#161616"/><circle cx="775.1" cy="867.6" r="1.2" fill="#161616"/><path d="M770.6 880.0 L761.6 880.0" stroke="#161616" stroke-width="1.8" fill="none" stroke-linecap="round"/><ellipse cx="766.1" cy="876.0" rx="3.8" ry="4.0" fill="#161616"/><path d="M759.1 859.6 Q758.1 870.0 758.6 880.5" stroke="#161616" stroke-width="1.8" fill="none" stroke-linecap="round"/><path d="M752.9 860.0 Q751.9 870.0 752.4 880.0 L749.1 880.0" stroke="#161616" stroke-width="1.8" fill="none" stroke-linecap="round"/><path d="M755.6 880.0 L752.4 880.0" stroke="#161616" stroke-width="1.8" fill="none" stroke-linecap="round"/><ellipse cx="745.1" cy="876.0" rx="3.1" ry="4.4" fill="#161616"/><circle cx="743.1" cy="867.6" r="1.2" fill="#161616"/><circle cx="747.1" cy="867.6" r="1.2" fill="#161616"/></g></svg><!--/SLIDEART-->
<!-- inspector -->
<div class="a" style="left:1235px;top:120px;width:284px;height:892px;background:#ececec;border-left:1px solid #c2c2c2"></div>
<div class="a" style="left:1236px;top:149px;width:283px;height:1px;background:#d6d6d6"></div>
<div class="t" id="t_i_sl" style="left:1340.1px;top:129px;font-size:13px;color:#8a8a8a;transform:scaleX(1.025);transform-origin:0 0">Slide Layout</div>
<div class="a" style="left:1236px;top:150px;width:283px;height:94px;background:#fff;border-bottom:1px solid #d9d9d9"></div>
<div class="a" style="left:1252px;top:163px;width:95px;height:70px;background:#fff;box-shadow:0 1px 2px rgba(0,0,0,.3)"></div>
<svg style="left:1252px;top:163px" width="95" height="70"><rect x="3" y="1" width="89.5" height="63" rx="8" fill="none" stroke="#e6e6e6" stroke-width="0.8"/>
<path d="M9 12.5 H52" stroke="#444" stroke-width="1.6" stroke-dasharray="7 1 6 1 8 1"/><path d="M15 15.2 H88" stroke="#8fa8b0" stroke-width="0.6"/>
<g stroke="#8a8a8a" stroke-width="1" stroke-dasharray="9 1 5 1 7 1 4 1"><path d="M41 21 H84 M34 25.5 H84 M62 30 H84 M42 35 H84 M37 39.7 H84 M67 44.2 H84 M39 49.8 H84 M37 54.3 H84"/></g></svg>
<div class="t" id="t_i_def" style="left:1364.0px;top:180px;font-size:13px;font-weight:bold;color:#262626;transform:scaleX(1.047);transform-origin:0 0">Default</div>
<div class="a" style="left:1364px;top:204px;width:125px;height:21px;background:#fff;border-radius:4px;box-shadow:0 0.5px 1.5px rgba(0,0,0,.35)"></div>
<div class="t" id="t_i_cm" style="left:1381.5px;top:209px;font-size:13px;color:#222;transform:scaleX(1.016);transform-origin:0 0">Change Master</div>
<div class="t" id="t_i_app" style="left:1253.5px;top:265px;font-size:13px;color:#333;font-weight:bold;transform:scaleX(0.986);transform-origin:0 0">Appearance</div>
<div class="a" style="left:1255px;top:289px;width:14px;height:14px;background:#fff;border-radius:3px;box-shadow:0 0 0 .5px rgba(0,0,0,.2),0 .5px 1px rgba(0,0,0,.25)"></div>
<div class="t" id="t_i_title" style="left:1274.0px;top:290px;font-size:13px;color:#2a2a2a;transform:scaleX(0.980);transform-origin:0 0">Title</div>
<div class="a" style="left:1255px;top:314px;width:14px;height:14px;background:#fff;border-radius:3px;box-shadow:0 0 0 .5px rgba(0,0,0,.2),0 .5px 1px rgba(0,0,0,.25)"></div>
<div class="t" id="t_i_body" style="left:1273.3px;top:315px;font-size:13px;color:#2a2a2a;transform:scaleX(0.983);transform-origin:0 0">Body</div>
<div class="a" style="left:1255px;top:339px;width:14px;height:14px;background:#3a8af4;border-radius:3px"></div>
<svg style="left:1255px;top:339px" width="14" height="14"><path d="M3.3 7.3 L6 10 L10.8 3.8" fill="none" stroke="#fff" stroke-width="1.6"/></svg>
<div class="t" id="t_i_sn" style="left:1273.3px;top:341px;font-size:13px;color:#2a2a2a;transform:scaleX(1.018);transform-origin:0 0">Slide Number</div>
<div class="a" style="left:1253px;top:369px;width:249px;height:1px;background:#d3d3d3"></div>
<svg style="left:1253px;top:391px" width="9" height="10"><path d="M0.5 0.5 L8 5 L0.5 9.5 Z" fill="#8a8a8a"/></svg>
<div class="t" id="t_i_bg" style="left:1269.0px;top:390px;font-size:13px;font-weight:bold;color:#2f2f2f;transform:scaleX(0.957);transform-origin:0 0">Background</div>
<div class="a" style="left:1433px;top:386px;width:69px;height:21px;background:#fff;border-radius:3px;box-shadow:0 0 0 .5px rgba(0,0,0,.25),0 .5px 1px rgba(0,0,0,.2)"></div>
<div class="a" style="left:1253px;top:420px;width:249px;height:1px;background:#d3d3d3"></div>
<div class="a" style="left:1273px;top:447px;width:208px;height:19px;background:#fff;border-radius:4px;box-shadow:0 0.5px 1.5px rgba(0,0,0,.35)"></div>
<div class="t" id="t_i_em" style="left:1327.4px;top:451px;font-size:13px;color:#222;transform:scaleX(0.991);transform-origin:0 0">Edit Master Slide</div>
<div class="a" style="left:1253px;top:490px;width:249px;height:1px;background:#d3d3d3"></div>

<!--TILE-->
<div class="a" style="left:1526px;top:524px;width:1px;height:31px;background:#9a9a9a"></div>
<div class="a" style="left:1529px;top:524px;width:1px;height:31px;background:#9a9a9a"></div>
<svg style="left:1534px;top:434px" width="379" height="212" viewBox="0 0 380 212" preserveAspectRatio="none">
<defs>
<linearGradient id="wall" x1="0" y1="0" x2="1" y2="0.3"><stop offset="0" stop-color="#d4d5d9"/><stop offset="0.55" stop-color="#dedfe3"/><stop offset="1" stop-color="#e6e7ea"/></linearGradient>
<linearGradient id="p1" x1="0" y1="0" x2="0" y2="1"><stop offset="0" stop-color="#d8783a"/><stop offset="0.2" stop-color="#b04a98"/><stop offset="0.55" stop-color="#6a3e98"/><stop offset="1" stop-color="#5a6ab8"/></linearGradient>
<radialGradient id="head" cx="0.45" cy="0.25" r="0.75"><stop offset="0" stop-color="#ecd8d0"/><stop offset="0.55" stop-color="#dcbcb0"/><stop offset="1" stop-color="#c49c8e"/></radialGradient>
<radialGradient id="p2" cx="0.55" cy="0.5" r="0.6"><stop offset="0" stop-color="#d4b880"/><stop offset="1" stop-color="#eee6b8"/></radialGradient>
</defs>
<rect width="380" height="212" fill="url(#wall)"/>
<rect x="145.5" y="-3" width="120.5" height="74" fill="#1f1e22"/>
<rect x="149.5" y="0" width="112.5" height="67" fill="url(#p1)"/>
<ellipse cx="205" cy="6" rx="40" ry="12" fill="#f2c040" opacity="0.85"/>
<ellipse cx="175" cy="10" rx="18" ry="8" fill="#e05a50" opacity="0.6"/>
<ellipse cx="172" cy="27" rx="14" ry="5" fill="#2a1e48" opacity="0.55"/>
<ellipse cx="242" cy="27" rx="14" ry="5" fill="#2a1e48" opacity="0.55"/>
<path d="M149.5 35 L168 67 L149.5 67 Z" fill="#4a8ad0" opacity="0.75"/>
<path d="M245 35 L262 28 L262 67 L240 67 Z" fill="#c040a0" opacity="0.55"/>
<rect x="265" y="7.5" width="88" height="54" fill="#2c2420"/>
<rect x="267.5" y="10" width="83" height="49" fill="url(#p2)"/>
<path d="M277 24 Q292 18 302 30 Q298 46 282 50 Q274 38 277 24 Z" fill="#c09a60" opacity="0.55"/>
<path d="M312 24 Q332 16 340 30 Q338 50 318 53 Q306 40 312 24 Z" fill="#b08848" opacity="0.6"/>
<ellipse cx="303" cy="37" rx="9" ry="6" fill="#80b8b0" opacity="0.5"/>
<rect x="64" y="78" width="23" height="25" fill="#f0f0f0"/><rect x="64.3" y="78.3" width="22.4" height="24.4" fill="none" stroke="#c4c4c4" stroke-width="0.6"/><rect x="68" y="82" width="8" height="5" fill="#c0c0c0"/>
<path d="M90 130 Q125 121 172 119 L247 121 Q300 126 318 140 Q345 172 356 212 L62 212 Q72 162 90 130 Z" fill="#1c181a"/>
<path d="M176 141 L233 141 L232 178 L226 212 L182 212 L178 178 Z" fill="#efedf0"/>
<path d="M176 141 L198 180 L182 212 L165 212 L170 160 Z" fill="#252022"/>
<path d="M233 141 L212 182 L226 212 L248 212 L240 160 Z" fill="#252022"/>
<circle cx="201" cy="185" r="2.2" fill="#1a1a1a"/>
<circle cx="262" cy="182" r="3" fill="#3a4a6a"/><circle cx="262" cy="182" r="1.3" fill="#d0d8e8"/>
<path d="M164 60 Q164 18 207.5 18 Q251 18 251 60 L250 95 Q256 86 258 96 Q258 112 249 118 Q244 146 208 151 Q174 146 168 118 Q159 112 159 96 Q161 86 166 95 Z" fill="url(#head)"/>
<path d="M198 96 Q205 110 204 120 Q208 124 214 120 Q212 110 216 96" fill="none" stroke="#b88c80" stroke-width="1.2" opacity="0.7"/>
<path d="M190 127 Q207 122 225 127 Q207 131 190 127 Z" fill="#a87270" opacity="0.7"/>
<path d="M176 84 Q186 80 198 84 M218 84 Q230 80 242 84" stroke="#8a6a60" stroke-width="1.3" fill="none" opacity="0.8"/>
<g fill="none" stroke="#7a6a62" stroke-width="1.3"><path d="M166 74 Q185 71 202 75 L202 86 Q198 94 184 94 Q168 93 166 84 Z"/><path d="M214 75 Q232 71 256 76 L254 87 Q250 95 232 95 Q216 94 214 86 Z"/><path d="M202 77 Q208 74 214 77 M166 75 L160 73 M256 77 L260 76"/></g>
<rect x="0" y="188" width="120" height="24" fill="#272727" opacity="0.9"/>
<g fill="#f2c41e"><rect x="4" y="203" width="3.6" height="6"/><rect x="9" y="199.5" width="3.6" height="9.5"/><rect x="14" y="196" width="3.6" height="13"/><rect x="19" y="193" width="3.6" height="16"/></g>
</svg>
<div class="t" id="t_v_name" style="left:1562.2px;top:628px;font-size:15.5px;color:#f4f4f4;transform:scaleX(1.008);transform-origin:0 0">omar murad</div>
<!--/TILE-->
<!-- ===== ZOOM BOTTOM BAR ===== -->
<svg style="left:48px;top:1020px" width="22" height="30"><rect x="5" y="0" width="11.5" height="20" rx="5.75" fill="#b3b3b3"/><path d="M1.5 12 Q1.5 22 10.75 22 Q20 22 20 12" fill="none" stroke="#b3b3b3" stroke-width="2"/><path d="M10.75 22 V27 M5 27.5 H16.5" stroke="#b3b3b3" stroke-width="2"/></svg>
<svg style="left:92px;top:1031px" width="11" height="7"><path d="M1 6 L5.2 1.5 L9.4 6" fill="none" stroke="#b3b3b3" stroke-width="1.6"/></svg>
<svg style="left:158px;top:1018px" width="34" height="34"><rect x="1" y="7.5" width="20" height="17.5" rx="3" fill="#b3b3b3"/><path d="M22 13 L30 8.5 L30 24 L22 19.5 Z" fill="#b3b3b3"/><path d="M1.5 33.5 L31 1.5" stroke="#e8585a" stroke-width="2"/></svg>
<svg style="left:214px;top:1031px" width="11" height="7"><path d="M1 6 L5.2 1.5 L9.4 6" fill="none" stroke="#b3b3b3" stroke-width="1.6"/></svg>
<div class="zl" id="t_b_mute" style="left:40.1px;transform:scaleX(1.011);transform-origin:0 0">Mute</div>
<div class="zl" id="t_b_video" style="left:135.5px;transform:scaleX(0.956);transform-origin:0 0">Start Video</div>

<svg style="left:702px;top:1023px" width="24" height="26"><path d="M11.5 0.5 L22.5 4.5 L22.5 12 C22.5 18.5 17.5 23 11.5 25 C5.5 23 0.5 18.5 0.5 12 L0.5 4.5 Z" fill="#b3b3b3"/><path d="M11.5 2.6 L11.5 12 L20.6 12 C20.6 6 20.6 6 20.6 5.8 Z M11.5 12 L11.5 23 C6.5 21 2.4 17.5 2.4 12 Z" fill="#1a1a1a"/></svg>
<div class="zl" id="t_b_sec" style="left:686.1px;transform:scaleX(0.929);transform-origin:0 0">Security</div>
<svg style="left:804px;top:1025px" width="32" height="23"><circle cx="10" cy="5.5" r="5.3" fill="#b3b3b3"/><circle cx="22.5" cy="7.5" r="4.6" fill="#b3b3b3"/><path d="M0.5 22.5 Q0.5 13 10 13 Q19.5 13 19.5 22.5 Z" fill="#b3b3b3"/><path d="M19 22.5 Q19.5 15 23.5 15 Q30.5 15 30.5 22.5 Z" fill="#b3b3b3"/></svg>
<div class="t" id="t_b_75" style="left:838.2px;top:1026px;font-size:15px;color:#cdcdcd;transform:scaleX(0.925);transform-origin:0 0">75</div>
<div class="zl" id="t_b_part" style="left:780.1px;transform:scaleX(0.945);transform-origin:0 0">Participants</div>
<svg style="left:914px;top:1024px" width="26" height="24"><rect x="0" y="0" width="25.6" height="17.5" rx="4.5" fill="#b3b3b3"/><path d="M5 16 L5 23 L12 16 Z" fill="#b3b3b3"/></svg>
<div class="zl" id="t_b_chat" style="left:910.5px;transform:scaleX(0.906);transform-origin:0 0">Chat</div>
<div class="a" style="left:1023px;top:1025px;width:30px;height:22px;background:#25d35f;border-radius:3px"></div>
<svg style="left:1030px;top:1028px" width="16" height="16"><path d="M8 13.5 V3 M3.5 7 L8 2.5 L12.5 7" fill="none" stroke="#0c0c0c" stroke-width="2.2"/></svg>
<svg style="left:1078px;top:1032px" width="11" height="7"><path d="M1 6 L5.2 1.5 L9.4 6" fill="none" stroke="#b3b3b3" stroke-width="1.6"/></svg>
<div class="zl" id="t_b_share" style="left:993.5px;color:#35c95a;transform:scaleX(0.904);transform-origin:0 0">Share Screen</div>
<div class="a" style="left:1155px;top:1020px;width:25px;height:26px;background:#b3b3b3;border-radius:3px"></div>
<div class="a" style="left:1163px;top:1028px;width:3px;height:10px;background:#1a1a1a"></div>
<div class="a" style="left:1169px;top:1028px;width:3px;height:10px;background:#1a1a1a"></div>
<div class="a" style="left:1186px;top:1020px;width:26px;height:26px;background:#b3b3b3;border-radius:3px"></div>
<div class="a" style="left:1194px;top:1028px;width:10px;height:10px;background:#1a1a1a"></div>
<div class="zl" id="t_b_rec" style="left:1109.8px;transform:scaleX(0.900);transform-origin:0 0">Pause/Stop Recording</div>
<svg style="left:1304px;top:1020px" width="30" height="30"><circle cx="11.5" cy="16" r="11.3" fill="#b3b3b3"/><circle cx="7.5" cy="14" r="1.4" fill="#1a1a1a"/><circle cx="15.5" cy="14" r="1.4" fill="#1a1a1a"/><path d="M6.5 18 Q11.5 22.5 16.5 18" fill="none" stroke="#1a1a1a" stroke-width="1.6"/><path d="M24 0.5 V9 M19.8 4.8 H28.2" stroke="#1a1a1a" stroke-width="4"/><path d="M24 0.5 V9 M19.8 4.8 H28.2" stroke="#b3b3b3" stroke-width="1.6"/></svg>
<div class="zl" id="t_b_react" style="left:1283.5px;transform:scaleX(0.893);transform-origin:0 0">Reactions</div>
<div class="a" style="left:1828px;top:1030px;width:77px;height:34px;background:#c1272d;border-radius:8px"></div>
<div class="t" id="t_b_leave" style="left:1846.2px;top:1040px;font-size:15px;font-weight:bold;color:#fff;transform:scaleX(0.959);transform-origin:0 0">Leave</div>

</body></html>
